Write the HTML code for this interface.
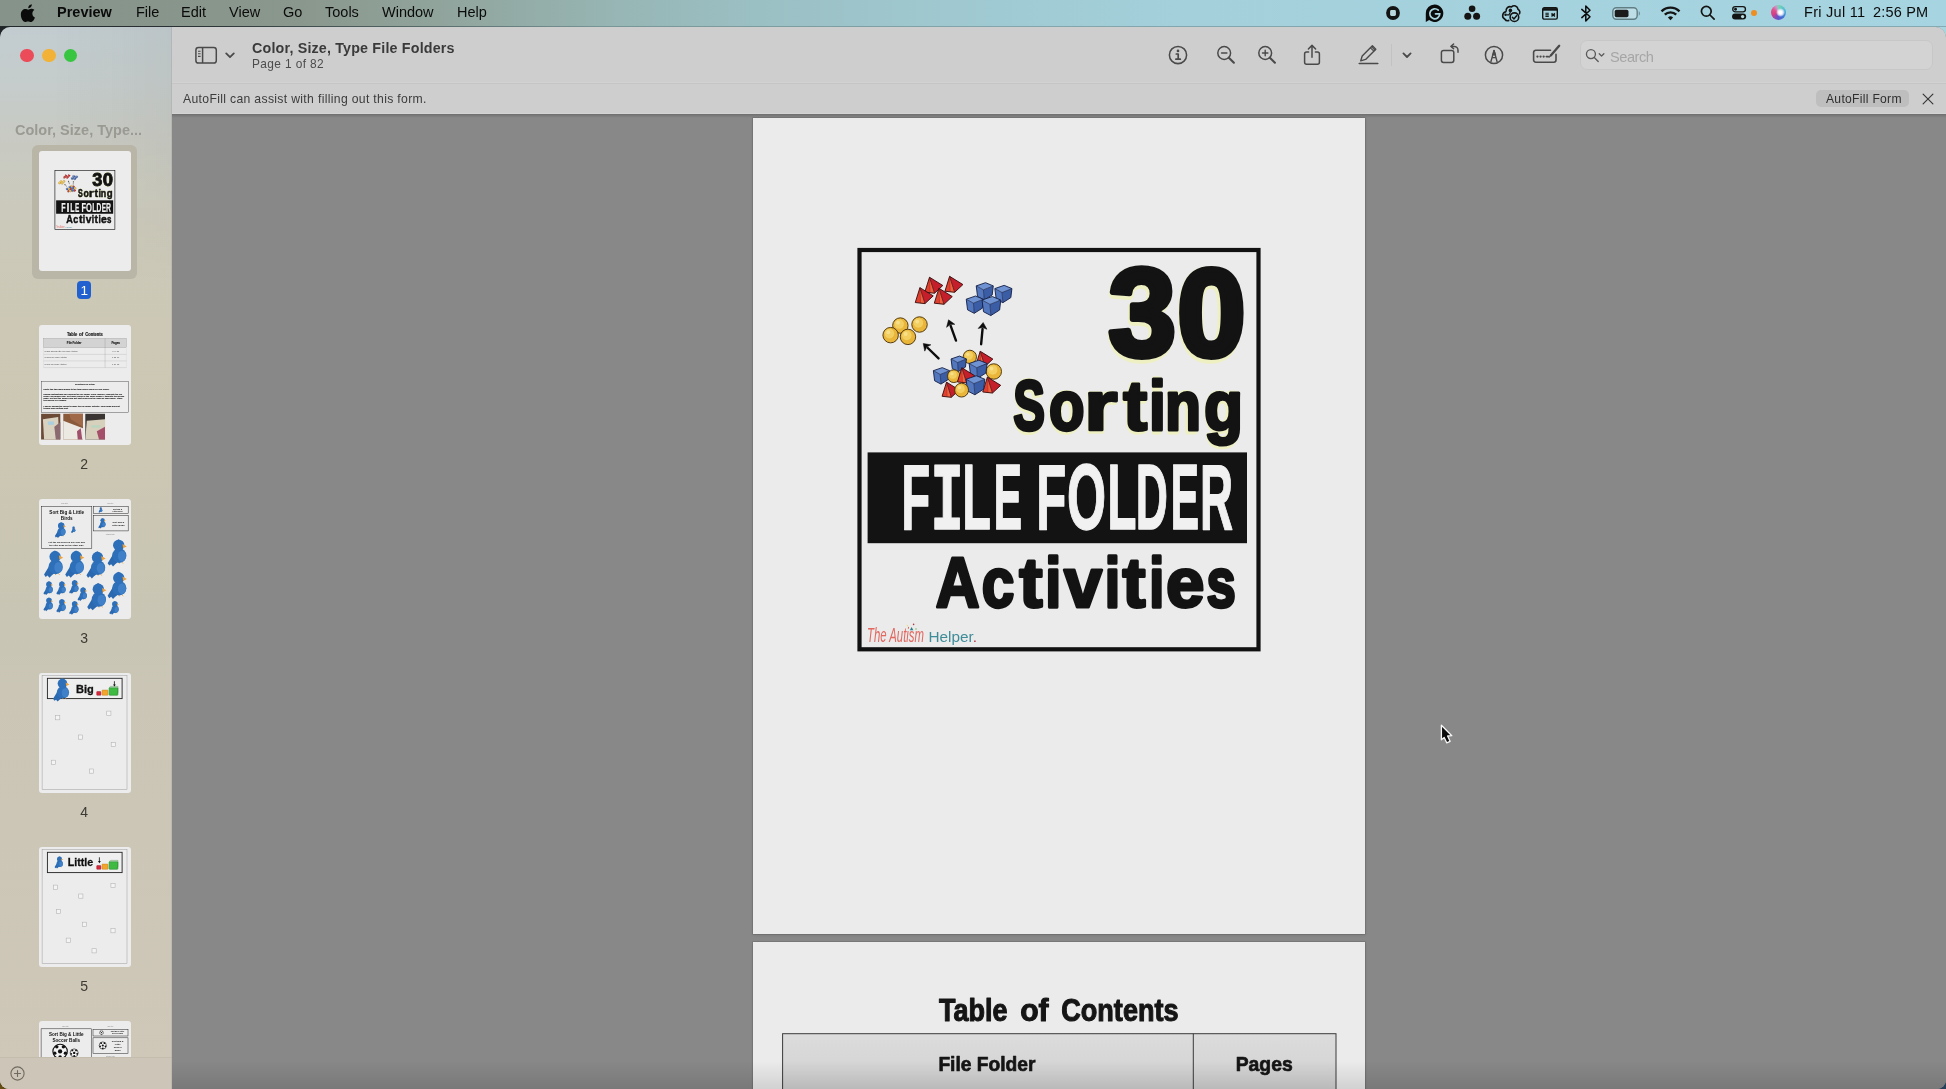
<!DOCTYPE html>
<html lang="en">
<head>
<meta charset="utf-8">
<title>Preview</title>
<style>
*{box-sizing:border-box;margin:0;padding:0}
html,body{width:1946px;height:1089px;overflow:hidden;background:#1d2226}
#bgtop{left:0;top:26px;width:1946px;height:14px;background:linear-gradient(90deg,#1f2427 0,#2a3033 200px,#566a68 420px,#7b9a9a 600px,#86aab0 1000px,#a9d5e0 1900px)}
#bgbl{left:0;top:1069px;width:20px;height:20px;background:linear-gradient(45deg,#6a5214,#2c2410 60%,#222 100%)}
#bgbr{left:1926px;top:1069px;width:20px;height:20px;background:#27405a}
#topline{left:0;top:25.6px;width:1946px;height:1.4px;background:linear-gradient(90deg,#23282b 0,#2c3235 200px,#566a68 420px,#789696 600px,#82a6ac 1000px,#86aab2 1946px);z-index:5}
body{font-family:"Liberation Sans","DejaVu Sans",sans-serif;position:relative;color:#2a2a2a}
.abs{position:absolute}
#menubar span,#tb_title,#tb_sub,#af_text,#af_btn,#tb_search,#sb_title,.tlabel,.gs{will-change:transform}
svg{position:absolute;overflow:visible}
#menubar{left:0;top:0;width:1946px;height:26px;background:linear-gradient(90deg,#86938a 0px,#8a978d 300px,#92a8a1 480px,#97b6b5 620px,#9bc0c4 760px,#a0cad3 1000px,#a3d0db 1180px,#a6d4e0 1946px)}
#menubar span{position:absolute;top:3px;font-size:14.5px;line-height:18px;color:#0b0b0b;white-space:nowrap}
#window{left:0;top:27px;width:1946px;height:1062px;border-radius:10.5px 10.5px 9px 9px;overflow:hidden;background:#888}
#winin{left:0;top:-1px;width:1946px;height:1063px}
#sidebar{left:0;top:0;width:172px;height:1063px;background:linear-gradient(180deg,#c2ccd0 0px,#c5cccb 60px,#c8cac3 110px,#cbc9ba 200px,#ccc8b5 300px,#cbc7b3 420px,#c9c5b4 600px,#ccc6b6 800px,#cfc8b8 1063px)}
#toolbar{left:172px;top:0;width:1774px;height:58px;background:#cecece}
#autofill{left:172px;top:58px;width:1774px;height:30px;background:#cecece}
#content{left:172px;top:88px;width:1774px;height:975px;background:#888}
.page{background:#ebebeb;box-shadow:0 0 0 .6px rgba(0,0,0,.16),0 1px 3px rgba(0,0,0,.14)}
.tlabel{position:absolute;margin-top:.6px;left:0;width:168.5px;text-align:center;font-size:14px;line-height:16px;color:#3c3a34}
.thumb{position:absolute;left:39px;width:91.8px;height:120.4px;background:#ececec;border-radius:3px;overflow:hidden}
</style>
</head>
<body>
<div id="bgtop" class="abs"></div><div id="bgbl" class="abs"></div><div id="bgbr" class="abs"></div><div id="topline" class="abs"></div>
<div id="menubar" class="abs">
  <svg style="left:20px;top:4px" width="17" height="18" viewBox="0 0 170 200"><path fill="#0b0b0b" d="M150 68c-10 6-22 19-22 40 0 25 16 37 28 42-2 8-9 24-19 36-9 11-18 14-27 14-11 0-17-6-31-6-14 0-21 6-31 6-11 0-20-7-29-19C6 164 0 138 0 116 0 76 26 55 50 55c12 0 23 8 31 8 8 0 20-9 35-9 8 0 25 2 34 14zM112 33c6-8 11-19 10-31-10 1-22 7-29 15-6 7-12 18-10 29 11 1 22-5 29-13z"/></svg>
  <span id="m_preview" style="left:57px;font-weight:bold">Preview</span>
  <span id="m_file" style="left:136px">File</span>
  <span id="m_edit" style="left:181px">Edit</span>
  <span id="m_view" style="left:229px">View</span>
  <span id="m_go" style="left:283px">Go</span>
  <span id="m_tools" style="left:325px">Tools</span>
  <span id="m_window" style="left:382px">Window</span>
  <span id="m_help" style="left:457px">Help</span>
  <!-- status icons -->
  <svg style="left:1386px;top:5.800px" width="14" height="14" viewBox="0 0 14 14"><circle cx="7" cy="7" r="6.9" fill="#141414"/><rect x="4.100" y="4.100" width="5.800" height="5.800" rx="1.300" fill="#b9d8de"/></svg>
  <svg style="left:1425px;top:3.600px" width="19" height="19" viewBox="0 0 19 19"><path d="M9.600,0.600a8.700,8.700 0 1 1-5.400,15.500L0.800,17.900V9.300A8.700,8.700 0 0 1 9.600,0.600z" fill="#0b0b0b"/><path d="M13.300,6.200a5,5 0 1 0 1.500,3.600h-4.300" fill="none" stroke="#a9d5df" stroke-width="1.700" stroke-linecap="round"/></svg>
  <svg style="left:1463px;top:5px" width="18" height="17" viewBox="0 0 18 17"><circle cx="9.100" cy="3.800" r="3.300" fill="#141414"/><circle cx="4.800" cy="11.300" r="3.500" fill="#141414"/><circle cx="13.600" cy="11.300" r="3.500" fill="#141414"/></svg>
  <svg style="left:1500px;top:3px" width="21" height="21" viewBox="0 0 21 21" fill="none" stroke="#141414" stroke-width="1.600"><path d="M6.200,8.700a4,4 0 0 1 5.300,-4.800a3.800,3.800 0 0 1 6.500,2.300a3.600,3.600 0 0 1 1.200,5.200"/><path d="M6.200,8.700a3.900,3.900 0 0 0 -1.500,7.300a3.600,3.600 0 0 0 4.600,1.300"/><circle cx="10.400" cy="7.400" r="1.800" fill="#141414" stroke="none"/><circle cx="5.600" cy="11.800" r="1.300" fill="#141414" stroke="none"/><path d="M6.800,11.800h2.200l1.400,-2.800" stroke-width="1.200"/><circle cx="14.400" cy="14.200" r="4.300" fill="#a5d2dd"/><path d="M12.400,14.300l1.500,1.600l2.700,-3.200" stroke-width="1.500" stroke-linecap="round" stroke-linejoin="round"/></svg>
  <svg style="left:1542px;top:6.800px" width="16" height="13" viewBox="0 0 16 13" fill="none" stroke="#141414"><rect x=".7" y=".7" width="14.600" height="11.400" rx="1.600" stroke-width="1.400"/><path d="M1,2.400h14" stroke-width="2.600"/><path d="M3.400,6.300h3.400M3.400,7.900h3.400M3.400,9.500h3.400" stroke-width="1.100"/><path d="M9.600,6.200l3.200,3.400M12.800,6.200l-3.200,3.400M9.300,7.900h3.800" stroke-width="1.100"/></svg>
  <svg style="left:1580px;top:4px" width="12" height="19" viewBox="0 0 12 19" fill="none" stroke="#0b0b0b" stroke-width="1.5" stroke-linejoin="round" stroke-linecap="round"><path d="M1.8 5.4l8.2 7.4-4.2 4.2V2l4.2 4.2-8.2 7.4"/></svg>
  <svg style="left:1612px;top:7px" width="29" height="13" viewBox="0 0 29 13"><rect x=".8" y=".8" width="24.400" height="11.400" rx="3.600" fill="rgba(255,255,255,.28)" stroke="#627e85" stroke-width="1.400"/><rect x="2.700" y="2.700" width="13.800" height="7.600" rx="1.800" fill="#1c1c1c"/><path d="M26.800,4.300c1.300,.4 1.300,4 0,4.400z" fill="#627e85"/></svg>
  <svg style="left:1660px;top:5px" width="21" height="16" viewBox="0 0 21 16" fill="none" stroke="#141414" stroke-width="2.400" stroke-linecap="butt"><path d="M1.500,6.300a12.800,12.800 0 0 1 18,0"/><path d="M4.800,9.700a8.100,8.100 0 0 1 11.400,0"/><path d="M7.900,12.600a3.700,3.700 0 0 1 5.200,0l-2.600,2.600z" fill="#141414" stroke="none"/></svg>
  <svg style="left:1700px;top:4.600px" width="15.300" height="15.300" viewBox="0 0 17 17" fill="none" stroke="#141414" stroke-width="1.900" stroke-linecap="round"><circle cx="7" cy="7" r="5.400"/><path d="M11.100,11.100l4.600,4.600"/></svg>
  <svg style="left:1731.800px;top:6.300px" width="14.200" height="13.600" viewBox="0 0 16 15.400"><rect x=".8" y=".8" width="14.400" height="5.800" rx="2.900" fill="none" stroke="#141414" stroke-width="1.500"/><circle cx="4" cy="3.700" r="1.600" fill="#141414"/><rect x="0" y="8.600" width="16" height="6.800" rx="3.400" fill="#141414"/><circle cx="12" cy="12" r="1.900" fill="#b4dae2"/></svg>
  <div class="abs" style="left:1750.600px;top:9.600px;width:6.400px;height:6.400px;border-radius:50%;background:#ee8f22"></div>
  <div class="abs" style="left:1771.200px;top:5px;width:14.800px;height:14.800px;border-radius:50%;background:conic-gradient(from 0deg,#78d6b0 0deg,#4fb8d8 70deg,#3f6fd6 140deg,#6a4fc8 190deg,#d23f86 250deg,#e0528c 300deg,#c89ad0 340deg,#78d6b0 360deg)"></div>
  <div class="abs" style="left:1775.500px;top:8.200px;width:9px;height:8.400px;border-radius:50%;background:radial-gradient(closest-side,#ffffff 30%,rgba(240,236,250,.85) 60%,rgba(255,255,255,0) 100%)"></div>
  <span id="m_date" style="left:1803.5px;letter-spacing:.28px">Fri Jul 11</span>
  <span id="m_time" style="left:1872.5px;letter-spacing:.2px">2:56 PM</span>
</div>
<div id="window" class="abs"><div id="winin" class="abs">
  <div id="sidebar" class="abs">
    <div class="abs" style="left:0;top:0;width:172px;height:260px;background:linear-gradient(90deg,rgba(0,0,0,0) 30%,rgba(40,30,20,.045) 100%);-webkit-mask-image:linear-gradient(180deg,#000 40%,transparent);mask-image:linear-gradient(180deg,#000 40%,transparent)"></div>
    <div class="abs" style="left:20.400px;top:22.700px;width:13.400px;height:13.400px;border-radius:50%;background:#ec4c59"></div>
    <div class="abs" style="left:42.200px;top:22.700px;width:13.400px;height:13.400px;border-radius:50%;background:#f1b237"></div>
    <div class="abs" style="left:63.800px;top:22.700px;width:13.400px;height:13.400px;border-radius:50%;background:#38c641"></div>
    <div id="sb_title" class="abs" style="left:15px;top:95px;font-size:14.5px;line-height:18px;font-weight:bold;color:#9a9a93;white-space:nowrap">Color, Size, Type...</div>
    <div class="abs" style="left:31.800px;top:118.700px;width:105.200px;height:134.200px;border-radius:6px;background:#b9b5a7"></div><div class="thumb" style="top:124.9px"></div><div class="thumb" style="top:298.8px"></div><div class="thumb" style="top:472.8px"></div><div class="thumb" style="top:646.9px"></div><div class="thumb" style="top:820.9px"></div><div class="thumb" style="top:994.6px"></div><svg class="gs" style="left:0;top:-26px" width="172" height="1089" viewBox="0 0 172 1089"><g transform="translate(38.900,150.900) scale(0.15033,0.1478)"><rect x="106.5" y="132" width="399" height="399.3" fill="none" stroke="#111111" stroke-width="4.2"/><g transform="translate(117,147) scale(0.13311)"><polygon points="447.0,92.0 412.0,204.0 485.0,212.0" fill="#e2402f"/><polygon points="447.0,92.0 452.0,210.0 485.0,212.0" fill="#f0603c"/><polygon points="447.0,92.0 485.0,212.0 547.0,154.0" fill="#c41f2b"/><polygon points="447.0,92.0 412.0,204.0 485.0,212.0 547.0,154.0" fill="none" stroke="#3a0d0d" stroke-width="7" stroke-linejoin="round"/><path d="M447.0,92.0L485.0,212.0" stroke="#3a0d0d" stroke-width="5"/><path d="M447.0,92.0L452.0,210.0" stroke="#7a1515" stroke-width="2.5"/><polygon points="598.0,85.0 563.0,197.0 636.0,205.0" fill="#e2402f"/><polygon points="598.0,85.0 603.0,203.0 636.0,205.0" fill="#f0603c"/><polygon points="598.0,85.0 636.0,205.0 698.0,147.0" fill="#c41f2b"/><polygon points="598.0,85.0 563.0,197.0 636.0,205.0 698.0,147.0" fill="none" stroke="#3a0d0d" stroke-width="7" stroke-linejoin="round"/><path d="M598.0,85.0L636.0,205.0" stroke="#3a0d0d" stroke-width="5"/><path d="M598.0,85.0L603.0,203.0" stroke="#7a1515" stroke-width="2.5"/><polygon points="375.0,170.0 340.0,282.0 413.0,290.0" fill="#e2402f"/><polygon points="375.0,170.0 380.0,288.0 413.0,290.0" fill="#f0603c"/><polygon points="375.0,170.0 413.0,290.0 475.0,232.0" fill="#c41f2b"/><polygon points="375.0,170.0 340.0,282.0 413.0,290.0 475.0,232.0" fill="none" stroke="#3a0d0d" stroke-width="7" stroke-linejoin="round"/><path d="M375.0,170.0L413.0,290.0" stroke="#3a0d0d" stroke-width="5"/><path d="M375.0,170.0L380.0,288.0" stroke="#7a1515" stroke-width="2.5"/><polygon points="518.0,175.0 483.0,287.0 556.0,295.0" fill="#e2402f"/><polygon points="518.0,175.0 523.0,293.0 556.0,295.0" fill="#f0603c"/><polygon points="518.0,175.0 556.0,295.0 618.0,237.0" fill="#c41f2b"/><polygon points="518.0,175.0 483.0,287.0 556.0,295.0 618.0,237.0" fill="none" stroke="#3a0d0d" stroke-width="7" stroke-linejoin="round"/><path d="M518.0,175.0L556.0,295.0" stroke="#3a0d0d" stroke-width="5"/><path d="M518.0,175.0L523.0,293.0" stroke="#7a1515" stroke-width="2.5"/><polygon points="798.0,157.0 868.0,133.0 926.0,157.0 852.0,187.0" fill="#6f93d2"/><polygon points="798.0,157.0 852.0,187.0 858.0,263.0 808.0,237.0" fill="#5277bf"/><polygon points="852.0,187.0 926.0,157.0 918.0,225.0 858.0,263.0" fill="#3b5da6"/><polygon points="798.0,157.0 868.0,133.0 926.0,157.0 918.0,225.0 858.0,263.0 808.0,237.0" fill="none" stroke="#16224a" stroke-width="7" stroke-linejoin="round"/><path d="M798.0,157.0L852.0,187.0L926.0,157.0M852.0,187.0L858.0,263.0" fill="none" stroke="#16224a" stroke-width="5" stroke-linejoin="round"/><polygon points="938.0,177.0 1008.0,153.0 1066.0,177.0 992.0,207.0" fill="#6f93d2"/><polygon points="938.0,177.0 992.0,207.0 998.0,283.0 948.0,257.0" fill="#5277bf"/><polygon points="992.0,207.0 1066.0,177.0 1058.0,245.0 998.0,283.0" fill="#3b5da6"/><polygon points="938.0,177.0 1008.0,153.0 1066.0,177.0 1058.0,245.0 998.0,283.0 948.0,257.0" fill="none" stroke="#16224a" stroke-width="7" stroke-linejoin="round"/><path d="M938.0,177.0L992.0,207.0L1066.0,177.0M992.0,207.0L998.0,283.0" fill="none" stroke="#16224a" stroke-width="5" stroke-linejoin="round"/><polygon points="723.0,257.0 793.0,233.0 851.0,257.0 777.0,287.0" fill="#6f93d2"/><polygon points="723.0,257.0 777.0,287.0 783.0,363.0 733.0,337.0" fill="#5277bf"/><polygon points="777.0,287.0 851.0,257.0 843.0,325.0 783.0,363.0" fill="#3b5da6"/><polygon points="723.0,257.0 793.0,233.0 851.0,257.0 843.0,325.0 783.0,363.0 733.0,337.0" fill="none" stroke="#16224a" stroke-width="7" stroke-linejoin="round"/><path d="M723.0,257.0L777.0,287.0L851.0,257.0M777.0,287.0L783.0,363.0" fill="none" stroke="#16224a" stroke-width="5" stroke-linejoin="round"/><polygon points="841.8,263.2 918.8,236.8 982.6,263.2 901.2,296.2" fill="#6f93d2"/><polygon points="841.8,263.2 901.2,296.2 907.8,379.8 852.8,351.2" fill="#5277bf"/><polygon points="901.2,296.2 982.6,263.2 973.8,338.0 907.8,379.8" fill="#3b5da6"/><polygon points="841.8,263.2 918.8,236.8 982.6,263.2 973.8,338.0 907.8,379.8 852.8,351.2" fill="none" stroke="#16224a" stroke-width="7" stroke-linejoin="round"/><path d="M841.8,263.2L901.2,296.2L982.6,263.2M901.2,296.2L907.8,379.8" fill="none" stroke="#16224a" stroke-width="5" stroke-linejoin="round"/><circle cx="228.0" cy="455.0" r="58.0" fill="#e9b63a" stroke="#4a3206" stroke-width="7"/><circle cx="219.3" cy="443.4" r="36.0" fill="#f3cf62"/><circle cx="210.6" cy="433.0" r="14.5" fill="#f8e08a"/><circle cx="372.0" cy="447.0" r="58.0" fill="#e9b63a" stroke="#4a3206" stroke-width="7"/><circle cx="363.3" cy="435.4" r="36.0" fill="#f3cf62"/><circle cx="354.6" cy="425.0" r="14.5" fill="#f8e08a"/><circle cx="155.0" cy="527.0" r="58.0" fill="#e9b63a" stroke="#4a3206" stroke-width="7"/><circle cx="146.3" cy="515.4" r="36.0" fill="#f3cf62"/><circle cx="137.6" cy="505.0" r="14.5" fill="#f8e08a"/><circle cx="285.0" cy="540.0" r="58.0" fill="#e9b63a" stroke="#4a3206" stroke-width="7"/><circle cx="276.3" cy="528.4" r="36.0" fill="#f3cf62"/><circle cx="267.6" cy="518.0" r="14.5" fill="#f8e08a"/><path d="M515.0,702.0L434.4,623.5" stroke="#0d0d0d" stroke-width="18" stroke-linecap="round"/><polygon points="400.0,590.0 457.4,599.8 426.6,616.0 411.4,647.1" fill="#0d0d0d" stroke="#0d0d0d" stroke-width="4" stroke-linejoin="round"/><path d="M646.0,568.0L606.2,457.2" stroke="#0d0d0d" stroke-width="18" stroke-linecap="round"/><polygon points="590.0,412.0 637.3,446.0 602.6,447.0 575.2,468.3" fill="#0d0d0d" stroke="#0d0d0d" stroke-width="4" stroke-linejoin="round"/><path d="M835.0,595.0L845.6,479.8" stroke="#0d0d0d" stroke-width="18" stroke-linecap="round"/><polygon points="850.0,432.0 878.5,482.8 846.6,469.0 812.7,476.8" fill="#0d0d0d" stroke="#0d0d0d" stroke-width="4" stroke-linejoin="round"/><polygon points="828.0,648.0 794.8,754.4 864.1,762.0" fill="#e2402f"/><polygon points="828.0,648.0 832.8,760.1 864.1,762.0" fill="#f0603c"/><polygon points="828.0,648.0 864.1,762.0 923.0,706.9" fill="#c41f2b"/><polygon points="828.0,648.0 794.8,754.4 864.1,762.0 923.0,706.9" fill="none" stroke="#3a0d0d" stroke-width="7" stroke-linejoin="round"/><path d="M828.0,648.0L864.1,762.0" stroke="#3a0d0d" stroke-width="5"/><path d="M828.0,648.0L832.8,760.1" stroke="#7a1515" stroke-width="2.5"/><circle cx="750.0" cy="690.0" r="50.0" fill="#e9b63a" stroke="#4a3206" stroke-width="7"/><circle cx="742.5" cy="680.0" r="31.0" fill="#f3cf62"/><circle cx="735.0" cy="671.0" r="12.5" fill="#f8e08a"/><polygon points="609.2,705.8 672.2,684.2 724.4,705.8 657.8,732.8" fill="#6f93d2"/><polygon points="609.2,705.8 657.8,732.8 663.2,801.2 618.2,777.8" fill="#5277bf"/><polygon points="657.8,732.8 724.4,705.8 717.2,767.0 663.2,801.2" fill="#3b5da6"/><polygon points="609.2,705.8 672.2,684.2 724.4,705.8 717.2,767.0 663.2,801.2 618.2,777.8" fill="none" stroke="#16224a" stroke-width="7" stroke-linejoin="round"/><path d="M609.2,705.8L657.8,732.8L724.4,705.8M657.8,732.8L663.2,801.2" fill="none" stroke="#16224a" stroke-width="5" stroke-linejoin="round"/><polygon points="476.1,793.9 542.6,771.1 597.7,793.9 527.4,822.4" fill="#6f93d2"/><polygon points="476.1,793.9 527.4,822.4 533.1,894.6 485.6,869.9" fill="#5277bf"/><polygon points="527.4,822.4 597.7,793.9 590.1,858.5 533.1,894.6" fill="#3b5da6"/><polygon points="476.1,793.9 542.6,771.1 597.7,793.9 590.1,858.5 533.1,894.6 485.6,869.9" fill="none" stroke="#16224a" stroke-width="7" stroke-linejoin="round"/><path d="M476.1,793.9L527.4,822.4L597.7,793.9M527.4,822.4L533.1,894.6" fill="none" stroke="#16224a" stroke-width="5" stroke-linejoin="round"/><circle cx="930.0" cy="800.0" r="58.0" fill="#e9b63a" stroke="#4a3206" stroke-width="7"/><circle cx="921.3" cy="788.4" r="36.0" fill="#f3cf62"/><circle cx="912.6" cy="778.0" r="14.5" fill="#f8e08a"/><polygon points="744.9,740.1 818.4,714.9 879.3,740.1 801.6,771.6" fill="#6f93d2"/><polygon points="744.9,740.1 801.6,771.6 807.9,851.4 755.4,824.1" fill="#5277bf"/><polygon points="801.6,771.6 879.3,740.1 870.9,811.5 807.9,851.4" fill="#3b5da6"/><polygon points="744.9,740.1 818.4,714.9 879.3,740.1 870.9,811.5 807.9,851.4 755.4,824.1" fill="none" stroke="#16224a" stroke-width="7" stroke-linejoin="round"/><path d="M744.9,740.1L801.6,771.6L879.3,740.1M801.6,771.6L807.9,851.4" fill="none" stroke="#16224a" stroke-width="5" stroke-linejoin="round"/><circle cx="630.0" cy="835.0" r="48.0" fill="#e9b63a" stroke="#4a3206" stroke-width="7"/><circle cx="622.8" cy="825.4" r="29.8" fill="#f3cf62"/><circle cx="615.6" cy="816.8" r="12.0" fill="#f8e08a"/><polygon points="690.0,772.0 656.8,878.4 726.1,886.0" fill="#e2402f"/><polygon points="690.0,772.0 694.8,884.1 726.1,886.0" fill="#f0603c"/><polygon points="690.0,772.0 726.1,886.0 785.0,830.9" fill="#c41f2b"/><polygon points="690.0,772.0 656.8,878.4 726.1,886.0 785.0,830.9" fill="none" stroke="#3a0d0d" stroke-width="7" stroke-linejoin="round"/><path d="M690.0,772.0L726.1,886.0" stroke="#3a0d0d" stroke-width="5"/><path d="M690.0,772.0L694.8,884.1" stroke="#7a1515" stroke-width="2.5"/><polygon points="882.0,842.0 847.0,954.0 920.0,962.0" fill="#e2402f"/><polygon points="882.0,842.0 887.0,960.0 920.0,962.0" fill="#f0603c"/><polygon points="882.0,842.0 920.0,962.0 982.0,904.0" fill="#c41f2b"/><polygon points="882.0,842.0 847.0,954.0 920.0,962.0 982.0,904.0" fill="none" stroke="#3a0d0d" stroke-width="7" stroke-linejoin="round"/><path d="M882.0,842.0L920.0,962.0" stroke="#3a0d0d" stroke-width="5"/><path d="M882.0,842.0L887.0,960.0" stroke="#7a1515" stroke-width="2.5"/><polygon points="721.8,858.2 798.8,831.8 862.6,858.2 781.2,891.2" fill="#6f93d2"/><polygon points="721.8,858.2 781.2,891.2 787.8,974.8 732.8,946.2" fill="#5277bf"/><polygon points="781.2,891.2 862.6,858.2 853.8,933.0 787.8,974.8" fill="#3b5da6"/><polygon points="721.8,858.2 798.8,831.8 862.6,858.2 853.8,933.0 787.8,974.8 732.8,946.2" fill="none" stroke="#16224a" stroke-width="7" stroke-linejoin="round"/><path d="M721.8,858.2L781.2,891.2L862.6,858.2M781.2,891.2L787.8,974.8" fill="none" stroke="#16224a" stroke-width="5" stroke-linejoin="round"/><polygon points="575.0,880.0 541.8,986.4 611.1,994.0" fill="#e2402f"/><polygon points="575.0,880.0 579.8,992.1 611.1,994.0" fill="#f0603c"/><polygon points="575.0,880.0 611.1,994.0 670.0,938.9" fill="#c41f2b"/><polygon points="575.0,880.0 541.8,986.4 611.1,994.0 670.0,938.9" fill="none" stroke="#3a0d0d" stroke-width="7" stroke-linejoin="round"/><path d="M575.0,880.0L611.1,994.0" stroke="#3a0d0d" stroke-width="5"/><path d="M575.0,880.0L579.8,992.1" stroke="#7a1515" stroke-width="2.5"/><circle cx="688.0" cy="940.0" r="52.0" fill="#e9b63a" stroke="#4a3206" stroke-width="7"/><circle cx="680.2" cy="929.6" r="32.2" fill="#f3cf62"/><circle cx="672.4" cy="920.2" r="13.0" fill="#f8e08a"/></g><rect x="114.6" y="334.4" width="379.4" height="90.8" fill="#131313"/><text transform="translate(356.35,239.50) scale(0.9259,1.0000)" font-family="Liberation Sans, DejaVu Sans, sans-serif" font-weight="bold" font-size="124.5" fill="#eef0c2" stroke="#eef0c2" stroke-width="1.35" stroke-linejoin="round" vector-effect="non-scaling-stroke">3</text><text transform="translate(425.08,239.50) scale(0.9373,1.0000)" font-family="Liberation Sans, DejaVu Sans, sans-serif" font-weight="bold" font-size="124.5" fill="#eef0c2" stroke="#eef0c2" stroke-width="1.35" stroke-linejoin="round" vector-effect="non-scaling-stroke">0</text><text transform="translate(355.52,238.30) scale(0.9744,1.0000)" font-family="Liberation Sans, DejaVu Sans, sans-serif" font-weight="bold" font-size="124.5" fill="#131313" stroke="#131313" stroke-width="0.90" stroke-linejoin="round" vector-effect="non-scaling-stroke">3</text><text transform="translate(424.14,238.30) scale(0.9880,1.0000)" font-family="Liberation Sans, DejaVu Sans, sans-serif" font-weight="bold" font-size="124.5" fill="#131313" stroke="#131313" stroke-width="0.90" stroke-linejoin="round" vector-effect="non-scaling-stroke">0</text><text transform="translate(261.17,313.20) scale(0.6080,1.0000)" font-family="Liberation Sans, DejaVu Sans, sans-serif" font-weight="bold" font-size="70.0" fill="#eef0c2" stroke="#eef0c2" stroke-width="0.90" stroke-linejoin="round" vector-effect="non-scaling-stroke">S</text><text transform="translate(296.85,313.20) scale(0.7509,1.0000)" font-family="Liberation Sans, DejaVu Sans, sans-serif" font-weight="bold" font-size="70.0" fill="#eef0c2" stroke="#eef0c2" stroke-width="0.90" stroke-linejoin="round" vector-effect="non-scaling-stroke">o</text><text transform="translate(332.25,313.20) scale(1.0942,1.0000)" font-family="Liberation Sans, DejaVu Sans, sans-serif" font-weight="bold" font-size="70.0" fill="#eef0c2" stroke="#eef0c2" stroke-width="0.90" stroke-linejoin="round" vector-effect="non-scaling-stroke">r</text><text transform="translate(371.14,313.20) scale(0.8888,1.0000)" font-family="Liberation Sans, DejaVu Sans, sans-serif" font-weight="bold" font-size="70.0" fill="#eef0c2" stroke="#eef0c2" stroke-width="0.90" stroke-linejoin="round" vector-effect="non-scaling-stroke">t</text><text transform="translate(398.20,313.20) scale(0.5518,1.0000)" font-family="Liberation Sans, DejaVu Sans, sans-serif" font-weight="bold" font-size="70.0" fill="#eef0c2" stroke="#eef0c2" stroke-width="0.90" stroke-linejoin="round" vector-effect="non-scaling-stroke">i</text><text transform="translate(413.12,313.20) scale(0.7544,1.0000)" font-family="Liberation Sans, DejaVu Sans, sans-serif" font-weight="bold" font-size="70.0" fill="#eef0c2" stroke="#eef0c2" stroke-width="0.90" stroke-linejoin="round" vector-effect="non-scaling-stroke">n</text><text transform="translate(452.02,313.20) scale(0.8294,1.0000)" font-family="Liberation Sans, DejaVu Sans, sans-serif" font-weight="bold" font-size="70.0" fill="#eef0c2" stroke="#eef0c2" stroke-width="0.90" stroke-linejoin="round" vector-effect="non-scaling-stroke">g</text><text transform="translate(260.33,312.00) scale(0.6796,1.0000)" font-family="Liberation Sans, DejaVu Sans, sans-serif" font-weight="bold" font-size="70.0" fill="#131313" stroke="#131313" stroke-width="0.45" stroke-linejoin="round" vector-effect="non-scaling-stroke">S</text><text transform="translate(295.93,312.00) scale(0.8313,1.0000)" font-family="Liberation Sans, DejaVu Sans, sans-serif" font-weight="bold" font-size="70.0" fill="#131313" stroke="#131313" stroke-width="0.45" stroke-linejoin="round" vector-effect="non-scaling-stroke">o</text><text transform="translate(330.91,312.00) scale(1.2333,1.0000)" font-family="Liberation Sans, DejaVu Sans, sans-serif" font-weight="bold" font-size="70.0" fill="#131313" stroke="#131313" stroke-width="0.45" stroke-linejoin="round" vector-effect="non-scaling-stroke">r</text><text transform="translate(370.32,312.00) scale(1.0277,1.0000)" font-family="Liberation Sans, DejaVu Sans, sans-serif" font-weight="bold" font-size="70.0" fill="#131313" stroke="#131313" stroke-width="0.45" stroke-linejoin="round" vector-effect="non-scaling-stroke">t</text><text transform="translate(395.98,312.00) scale(0.8642,1.0000)" font-family="Liberation Sans, DejaVu Sans, sans-serif" font-weight="bold" font-size="70.0" fill="#131313" stroke="#131313" stroke-width="0.45" stroke-linejoin="round" vector-effect="non-scaling-stroke">i</text><text transform="translate(412.01,312.00) scale(0.8431,1.0000)" font-family="Liberation Sans, DejaVu Sans, sans-serif" font-weight="bold" font-size="70.0" fill="#131313" stroke="#131313" stroke-width="0.45" stroke-linejoin="round" vector-effect="non-scaling-stroke">n</text><text transform="translate(451.07,312.00) scale(0.9146,1.0000)" font-family="Liberation Sans, DejaVu Sans, sans-serif" font-weight="bold" font-size="70.0" fill="#131313" stroke="#131313" stroke-width="0.45" stroke-linejoin="round" vector-effect="non-scaling-stroke">g</text><text transform="translate(148.37,411.30) scale(0.5175,1.0000)" font-family="Liberation Sans, DejaVu Sans, sans-serif" font-weight="bold" font-size="91.8" fill="#f1f1f1" stroke="#f1f1f1" stroke-width="0.16" stroke-linejoin="round" vector-effect="non-scaling-stroke">F</text><text transform="translate(184.42,411.30) scale(0.7865,1.0000)" font-family="Liberation Sans, DejaVu Sans, sans-serif" font-weight="bold" font-size="91.8" fill="#f1f1f1" stroke="#f1f1f1" stroke-width="0.16" stroke-linejoin="round" vector-effect="non-scaling-stroke">I</text><text transform="translate(209.21,411.30) scale(0.5116,1.0000)" font-family="Liberation Sans, DejaVu Sans, sans-serif" font-weight="bold" font-size="91.8" fill="#f1f1f1" stroke="#f1f1f1" stroke-width="0.16" stroke-linejoin="round" vector-effect="non-scaling-stroke">L</text><text transform="translate(240.38,411.30) scale(0.4679,1.0000)" font-family="Liberation Sans, DejaVu Sans, sans-serif" font-weight="bold" font-size="91.8" fill="#f1f1f1" stroke="#f1f1f1" stroke-width="0.16" stroke-linejoin="round" vector-effect="non-scaling-stroke">E</text><text transform="translate(283.15,411.30) scale(0.5368,1.0000)" font-family="Liberation Sans, DejaVu Sans, sans-serif" font-weight="bold" font-size="91.8" fill="#f1f1f1" stroke="#f1f1f1" stroke-width="0.16" stroke-linejoin="round" vector-effect="non-scaling-stroke">F</text><text transform="translate(314.09,411.30) scale(0.5472,1.0000)" font-family="Liberation Sans, DejaVu Sans, sans-serif" font-weight="bold" font-size="91.8" fill="#f1f1f1" stroke="#f1f1f1" stroke-width="0.16" stroke-linejoin="round" vector-effect="non-scaling-stroke">O</text><text transform="translate(354.24,411.30) scale(0.5222,1.0000)" font-family="Liberation Sans, DejaVu Sans, sans-serif" font-weight="bold" font-size="91.8" fill="#f1f1f1" stroke="#f1f1f1" stroke-width="0.16" stroke-linejoin="round" vector-effect="non-scaling-stroke">L</text><text transform="translate(382.77,411.30) scale(0.4849,1.0000)" font-family="Liberation Sans, DejaVu Sans, sans-serif" font-weight="bold" font-size="91.8" fill="#f1f1f1" stroke="#f1f1f1" stroke-width="0.16" stroke-linejoin="round" vector-effect="non-scaling-stroke">D</text><text transform="translate(417.58,411.30) scale(0.4679,1.0000)" font-family="Liberation Sans, DejaVu Sans, sans-serif" font-weight="bold" font-size="91.8" fill="#f1f1f1" stroke="#f1f1f1" stroke-width="0.16" stroke-linejoin="round" vector-effect="non-scaling-stroke">E</text><text transform="translate(447.08,411.30) scale(0.4994,1.0000)" font-family="Liberation Sans, DejaVu Sans, sans-serif" font-weight="bold" font-size="91.8" fill="#f1f1f1" stroke="#f1f1f1" stroke-width="0.16" stroke-linejoin="round" vector-effect="non-scaling-stroke">R</text><text transform="translate(182.69,489.20) scale(0.8605,1.0000)" font-family="Liberation Sans, DejaVu Sans, sans-serif" font-weight="bold" font-size="70.5" fill="#131313" stroke="#131313" stroke-width="0.45" stroke-linejoin="round" vector-effect="non-scaling-stroke">A</text><text transform="translate(228.81,489.20) scale(0.8317,1.0000)" font-family="Liberation Sans, DejaVu Sans, sans-serif" font-weight="bold" font-size="70.5" fill="#131313" stroke="#131313" stroke-width="0.45" stroke-linejoin="round" vector-effect="non-scaling-stroke">c</text><text transform="translate(266.35,489.20) scale(0.9928,1.0000)" font-family="Liberation Sans, DejaVu Sans, sans-serif" font-weight="bold" font-size="70.5" fill="#131313" stroke="#131313" stroke-width="0.45" stroke-linejoin="round" vector-effect="non-scaling-stroke">t</text><text transform="translate(292.28,489.20) scale(0.8167,1.0000)" font-family="Liberation Sans, DejaVu Sans, sans-serif" font-weight="bold" font-size="70.5" fill="#131313" stroke="#131313" stroke-width="0.45" stroke-linejoin="round" vector-effect="non-scaling-stroke">i</text><text transform="translate(310.93,489.20) scale(0.9709,1.0000)" font-family="Liberation Sans, DejaVu Sans, sans-serif" font-weight="bold" font-size="70.5" fill="#131313" stroke="#131313" stroke-width="0.45" stroke-linejoin="round" vector-effect="non-scaling-stroke">v</text><text transform="translate(351.83,489.20) scale(0.7857,1.0000)" font-family="Liberation Sans, DejaVu Sans, sans-serif" font-weight="bold" font-size="70.5" fill="#131313" stroke="#131313" stroke-width="0.45" stroke-linejoin="round" vector-effect="non-scaling-stroke">i</text><text transform="translate(369.46,489.20) scale(0.9790,1.0000)" font-family="Liberation Sans, DejaVu Sans, sans-serif" font-weight="bold" font-size="70.5" fill="#131313" stroke="#131313" stroke-width="0.45" stroke-linejoin="round" vector-effect="non-scaling-stroke">t</text><text transform="translate(396.13,489.20) scale(0.7650,1.0000)" font-family="Liberation Sans, DejaVu Sans, sans-serif" font-weight="bold" font-size="70.5" fill="#131313" stroke="#131313" stroke-width="0.45" stroke-linejoin="round" vector-effect="non-scaling-stroke">i</text><text transform="translate(412.90,489.20) scale(0.9810,1.0000)" font-family="Liberation Sans, DejaVu Sans, sans-serif" font-weight="bold" font-size="70.5" fill="#131313" stroke="#131313" stroke-width="0.45" stroke-linejoin="round" vector-effect="non-scaling-stroke">e</text><text transform="translate(453.45,489.20) scale(0.7477,1.0000)" font-family="Liberation Sans, DejaVu Sans, sans-serif" font-weight="bold" font-size="70.5" fill="#131313" stroke="#131313" stroke-width="0.45" stroke-linejoin="round" vector-effect="non-scaling-stroke">s</text><text id="tclogo1" x="114" y="524" font-family="Liberation Sans, DejaVu Sans, sans-serif" font-style="italic" font-size="19.5" textLength="57" lengthAdjust="spacingAndGlyphs" fill="#e2675f">The Autism</text><text id="tclogo2" x="175.5" y="523.900" font-family="Liberation Sans, DejaVu Sans, sans-serif" font-size="14" textLength="48.5" lengthAdjust="spacingAndGlyphs" fill="#3f8c99">Helper<tspan fill="#b23a48">.</tspan></text><path d="M156.800,512.200l1.800,-3.200l1.800,3.200z" fill="#2a7f8e"/><circle cx="160.600" cy="506.400" r="0.800" fill="#b23a48"/><rect x="162.300" y="510.300" width="1.400" height="1.400" fill="#8fbf6f"/><path d="M154,506.800l1.200,2" stroke="#e8d86a" stroke-width="0.800"/></g><g transform="translate(39.100,324.800) scale(0.1498,0.1477)"><text x="186.0" y="78.6" font-family="Liberation Sans, DejaVu Sans, sans-serif" font-weight="bold" font-size="31.5" textLength="68.5" lengthAdjust="spacingAndGlyphs" fill="#151515" stroke="#151515" stroke-width="1.1" stroke-linejoin="round">Table</text><text x="267.2" y="78.6" font-family="Liberation Sans, DejaVu Sans, sans-serif" font-weight="bold" font-size="31.5" textLength="28.4" lengthAdjust="spacingAndGlyphs" fill="#151515" stroke="#151515" stroke-width="1.1" stroke-linejoin="round">of</text><text x="308.3" y="78.6" font-family="Liberation Sans, DejaVu Sans, sans-serif" font-weight="bold" font-size="31.5" textLength="117.2" lengthAdjust="spacingAndGlyphs" fill="#151515" stroke="#151515" stroke-width="1.1" stroke-linejoin="round">Contents</text><rect x="29.6" y="91.7" width="553.4" height="62.7" fill="#d3d3d3" stroke="#3a3a3a" stroke-width="1"/><text x="185.4" y="129.2" font-family="Liberation Sans, DejaVu Sans, sans-serif" font-weight="bold" font-size="20.8" textLength="97" lengthAdjust="spacingAndGlyphs" fill="#151515" stroke="#151515" stroke-width="0.7" stroke-linejoin="round">File Folder</text><text x="482.7" y="129.2" font-family="Liberation Sans, DejaVu Sans, sans-serif" font-weight="bold" font-size="20.8" textLength="57" lengthAdjust="spacingAndGlyphs" fill="#151515" stroke="#151515" stroke-width="0.7" stroke-linejoin="round">Pages</text><path d="M29.600,200.4H583" stroke="#6a6a6a" stroke-width="1"/><text x="36" y="181.4" font-family="Liberation Sans, DejaVu Sans, sans-serif" font-size="11.5" fill="#333">10 Size (Big and Little) File Folder Activities</text><text x="511" y="181.4" font-family="Liberation Sans, DejaVu Sans, sans-serif" font-size="11.5" fill="#333" text-anchor="middle">p. 3 - 32</text><path d="M29.600,244.4H583" stroke="#6a6a6a" stroke-width="1"/><text x="36" y="226.4" font-family="Liberation Sans, DejaVu Sans, sans-serif" font-size="11.5" fill="#333">10 Color File Folder Activities</text><text x="511" y="226.4" font-family="Liberation Sans, DejaVu Sans, sans-serif" font-size="11.5" fill="#333" text-anchor="middle">p. 33 - 56</text><path d="M29.600,289.8H583" stroke="#6a6a6a" stroke-width="1"/><text x="36" y="271.1" font-family="Liberation Sans, DejaVu Sans, sans-serif" font-size="11.5" fill="#333">10 Type File Folder Activities</text><text x="511" y="271.1" font-family="Liberation Sans, DejaVu Sans, sans-serif" font-size="11.5" fill="#333" text-anchor="middle">p. 57 - 82</text><path d="M440.300,91.700V289.800" stroke="#3a3a3a" stroke-width="1"/><path d="M29.600,154.400V289.800M583,154.400V289.800" stroke="#9a9a9a" stroke-width=".8"/><rect x="15.4" y="383.2" width="583.4" height="212" fill="none" stroke="#222" stroke-width="2.5"/><text x="306" y="409" font-family="Liberation Sans, DejaVu Sans, sans-serif" font-weight="bold" font-size="13.5" text-anchor="middle" fill="#111" stroke="#111" stroke-width=".4">Directions for setup:</text><text x="30" y="441" font-family="Liberation Sans, DejaVu Sans, sans-serif" font-weight="bold" font-size="14.6" fill="#111" stroke="#111" stroke-width=".5">Paste the two main pages to the two inside sides of a file folder.</text><text x="30" y="474" font-family="Liberation Sans, DejaVu Sans, sans-serif" font-weight="bold" font-size="14.6" fill="#111" stroke="#111" stroke-width=".5">Follow instructions for labeling the file folder. Once labeled, laminate the file</text><text x="30" y="488" font-family="Liberation Sans, DejaVu Sans, sans-serif" font-weight="bold" font-size="14.6" fill="#111" stroke="#111" stroke-width=".5">folder (no longer use). Put hard velcro in the small boxes. Laminate the pieces</text><text x="30" y="502" font-family="Liberation Sans, DejaVu Sans, sans-serif" font-weight="bold" font-size="14.6" fill="#111" stroke="#111" stroke-width=".5">page. Cut out the pieces and put soft velcro on the back of each piece. Store</text><text x="30" y="516" font-family="Liberation Sans, DejaVu Sans, sans-serif" font-weight="bold" font-size="14.6" fill="#111" stroke="#111" stroke-width=".5">the pieces in a baggie.</text><text x="30" y="557" font-family="Liberation Sans, DejaVu Sans, sans-serif" font-weight="bold" font-size="14.6" fill="#111" stroke="#111" stroke-width=".5">Labels: Follow the guide to label the file folder activity. This helps prevent</text><text x="30" y="571" font-family="Liberation Sans, DejaVu Sans, sans-serif" font-weight="bold" font-size="14.6" fill="#111" stroke="#111" stroke-width=".5">things from getting lost.</text><rect x="13.4" y="602.6" width="128.1" height="174" fill="#6b4a36"/><polygon points="25.4,640 127.5,625 133.5,776.600 33.4,776.600" fill="#d9d2c0"/><polygon points="101.5,690 141.5,660 141.5,776.600 111.5,776.600" fill="#8a6a6e"/><rect x="58.4" y="655" width="40" height="22" fill="#a9cfe0"/><rect x="161.5" y="602.6" width="131.5" height="174" fill="#8a5a3a"/><polygon points="161.5,650 293,700 293,776.600 161.5,776.600" fill="#ece9e2"/><polygon points="201.5,602.600 293,602.600 293,690 211.5,640" fill="#a06a48"/><polygon points="253,720 278,700 288,776.600 258,776.600" fill="#a0506a"/><rect x="308.4" y="602.6" width="131.60000000000002" height="174" fill="#3a3432"/><polygon points="318.4,650 440,640 440,776.600 308.4,776.600" fill="#d6d0bc"/><rect x="348.4" y="680" width="60" height="16" fill="#b9d6c0"/><polygon points="385,720 440,690 440,776.600 400,776.600" fill="#a5506a"/></g><text x="64.50" y="504.20" font-family="Liberation Sans, DejaVu Sans, sans-serif" font-size="1.6" font-weight="normal" text-anchor="middle" fill="#888">Main Title</text><text x="110.30" y="504.20" font-family="Liberation Sans, DejaVu Sans, sans-serif" font-size="1.6" font-weight="normal" text-anchor="middle" fill="#888">Tab Title</text><text x="110.30" y="535.40" font-family="Liberation Sans, DejaVu Sans, sans-serif" font-size="1.6" font-weight="normal" text-anchor="middle" fill="#888">Straight Title</text><rect x="41.40" y="506.40" width="50.40" height="41.90" fill="none" stroke="#222" stroke-width="0.5"/><text x="66.70" y="514.00" font-family="Liberation Sans, DejaVu Sans, sans-serif" font-size="4.6" font-weight="bold" text-anchor="middle" fill="#111">Sort Big &amp; Little</text><text x="66.70" y="519.60" font-family="Liberation Sans, DejaVu Sans, sans-serif" font-size="4.6" font-weight="bold" text-anchor="middle" fill="#111">Birds</text><path d="M61.08,535.47 L61.70,536.40 M62.94,535.47 L63.87,536.25" stroke="#e8a040" stroke-width="0.46"/><polygon points="58.28,530.51 54.88,536.09 55.80,537.49 56.89,536.71 57.98,537.95 59.06,536.87 61.08,535.16" fill="#2a68b0"/><ellipse cx="61.54" cy="531.75" rx="4.11" ry="4.19" fill="#2d6fb8"/><ellipse cx="63.09" cy="532.06" rx="2.32" ry="3.10" fill="#3f80c8"/><circle cx="61.23" cy="525.86" r="3.25" fill="#2d6fb8"/><polygon points="59.52,523.38 61.08,522.30 62.62,523.23" fill="#2d6fb8"/><polygon points="63.40,525.09 65.88,526.48 63.71,527.57" fill="#f0a23a"/><path d="M73.52,531.91 L73.78,532.30 M74.30,531.91 L74.69,532.24" stroke="#e8a040" stroke-width="0.20"/><polygon points="72.36,529.83 70.92,532.17 71.31,532.75 71.77,532.43 72.22,532.95 72.68,532.50 73.52,531.78" fill="#2a68b0"/><ellipse cx="73.72" cy="530.35" rx="1.72" ry="1.76" fill="#2d6fb8"/><ellipse cx="74.37" cy="530.48" rx="0.97" ry="1.30" fill="#3f80c8"/><circle cx="73.59" cy="527.88" r="1.36" fill="#2d6fb8"/><polygon points="72.88,526.84 73.52,526.38 74.17,526.78" fill="#2d6fb8"/><polygon points="74.50,527.56 75.54,528.14 74.63,528.60" fill="#f0a23a"/><text x="66.70" y="543.20" font-family="Liberation Sans, DejaVu Sans, sans-serif" font-size="2.3" font-weight="bold" text-anchor="middle" fill="#111">Put the big birds on one side and</text><text x="66.70" y="546.20" font-family="Liberation Sans, DejaVu Sans, sans-serif" font-size="2.3" font-weight="bold" text-anchor="middle" fill="#111">the little birds on the other side.</text><rect x="93.30" y="506.40" width="34.90" height="7.10" fill="none" stroke="#222" stroke-width="0.5"/><path d="M100.78,511.87 L101.00,512.20 M101.44,511.87 L101.77,512.14" stroke="#e8a040" stroke-width="0.16"/><polygon points="99.78,510.11 98.58,512.09 98.91,512.59 99.29,512.31 99.67,512.75 100.06,512.37 100.78,511.76" fill="#2a68b0"/><ellipse cx="100.94" cy="510.55" rx="1.46" ry="1.49" fill="#2d6fb8"/><ellipse cx="101.49" cy="510.66" rx="0.82" ry="1.10" fill="#3f80c8"/><circle cx="100.83" cy="508.46" r="1.16" fill="#2d6fb8"/><polygon points="100.23,507.58 100.78,507.19 101.33,507.52" fill="#2d6fb8"/><polygon points="101.60,508.19 102.48,508.68 101.71,509.06" fill="#f0a23a"/><text x="117.50" y="509.60" font-family="Liberation Sans, DejaVu Sans, sans-serif" font-size="1.9" font-weight="bold" text-anchor="middle" fill="#111">Sort Big &amp;</text><text x="117.50" y="511.80" font-family="Liberation Sans, DejaVu Sans, sans-serif" font-size="1.9" font-weight="bold" text-anchor="middle" fill="#111">Little Birds</text><rect x="93.30" y="515.50" width="34.90" height="15.40" fill="none" stroke="#222" stroke-width="0.5"/><path d="M102.53,526.87 L102.95,527.50 M103.78,526.87 L104.42,527.39" stroke="#e8a040" stroke-width="0.32"/><polygon points="100.64,523.51 98.33,527.29 98.95,528.23 99.69,527.71 100.42,528.55 101.16,527.81 102.53,526.66" fill="#2a68b0"/><ellipse cx="102.84" cy="524.35" rx="2.78" ry="2.83" fill="#2d6fb8"/><ellipse cx="103.89" cy="524.56" rx="1.57" ry="2.10" fill="#3f80c8"/><circle cx="102.63" cy="520.36" r="2.21" fill="#2d6fb8"/><polygon points="101.48,518.68 102.53,517.94 103.58,518.57" fill="#2d6fb8"/><polygon points="104.10,519.83 105.78,520.78 104.31,521.51" fill="#f0a23a"/><text x="118.40" y="522.60" font-family="Liberation Sans, DejaVu Sans, sans-serif" font-size="2.4" font-weight="bold" text-anchor="middle" fill="#111">Sort Big &amp;</text><text x="118.40" y="526.00" font-family="Liberation Sans, DejaVu Sans, sans-serif" font-size="2.4" font-weight="bold" text-anchor="middle" fill="#111">Little Birds</text><path d="M54.85,573.38 L55.93,575.00 M58.09,573.38 L59.71,574.73" stroke="#e8a040" stroke-width="0.81"/><polygon points="49.99,564.74 44.05,574.46 45.67,576.89 47.56,575.54 49.45,577.70 51.34,575.81 54.85,572.84" fill="#2a68b0"/><ellipse cx="55.66" cy="566.90" rx="7.16" ry="7.29" fill="#2d6fb8"/><ellipse cx="58.36" cy="567.44" rx="4.05" ry="5.40" fill="#3f80c8"/><circle cx="55.12" cy="556.64" r="5.67" fill="#2d6fb8"/><polygon points="52.15,552.32 54.85,550.43 57.55,552.05" fill="#2d6fb8"/><polygon points="58.90,555.29 63.22,557.72 59.44,559.61" fill="#f0a23a"/><path d="M76.05,573.38 L77.13,575.00 M79.29,573.38 L80.91,574.73" stroke="#e8a040" stroke-width="0.81"/><polygon points="71.19,564.74 65.25,574.46 66.87,576.89 68.76,575.54 70.65,577.70 72.54,575.81 76.05,572.84" fill="#2a68b0"/><ellipse cx="76.86" cy="566.90" rx="7.16" ry="7.29" fill="#2d6fb8"/><ellipse cx="79.56" cy="567.44" rx="4.05" ry="5.40" fill="#3f80c8"/><circle cx="76.32" cy="556.64" r="5.67" fill="#2d6fb8"/><polygon points="73.35,552.32 76.05,550.43 78.75,552.05" fill="#2d6fb8"/><polygon points="80.10,555.29 84.42,557.72 80.64,559.61" fill="#f0a23a"/><path d="M97.25,574.18 L98.33,575.80 M100.49,574.18 L102.11,575.53" stroke="#e8a040" stroke-width="0.81"/><polygon points="92.39,565.54 86.45,575.26 88.07,577.69 89.96,576.34 91.85,578.50 93.74,576.61 97.25,573.64" fill="#2a68b0"/><ellipse cx="98.06" cy="567.70" rx="7.16" ry="7.29" fill="#2d6fb8"/><ellipse cx="100.76" cy="568.24" rx="4.05" ry="5.40" fill="#3f80c8"/><circle cx="97.52" cy="557.44" r="5.67" fill="#2d6fb8"/><polygon points="94.55,553.12 97.25,551.23 99.95,552.85" fill="#2d6fb8"/><polygon points="101.30,556.09 105.62,558.52 101.84,560.41" fill="#f0a23a"/><path d="M118.45,562.08 L119.53,563.70 M121.69,562.08 L123.31,563.43" stroke="#e8a040" stroke-width="0.81"/><polygon points="113.59,553.44 107.65,563.16 109.27,565.59 111.16,564.24 113.05,566.40 114.94,564.51 118.45,561.54" fill="#2a68b0"/><ellipse cx="119.26" cy="555.60" rx="7.16" ry="7.29" fill="#2d6fb8"/><ellipse cx="121.96" cy="556.14" rx="4.05" ry="5.40" fill="#3f80c8"/><circle cx="118.72" cy="545.34" r="5.67" fill="#2d6fb8"/><polygon points="115.75,541.02 118.45,539.13 121.15,540.75" fill="#2d6fb8"/><polygon points="122.50,543.99 126.82,546.42 123.04,548.31" fill="#f0a23a"/><path d="M118.45,594.68 L119.53,596.30 M121.69,594.68 L123.31,596.03" stroke="#e8a040" stroke-width="0.81"/><polygon points="113.59,586.04 107.65,595.76 109.27,598.19 111.16,596.84 113.05,599.00 114.94,597.11 118.45,594.14" fill="#2a68b0"/><ellipse cx="119.26" cy="588.20" rx="7.16" ry="7.29" fill="#2d6fb8"/><ellipse cx="121.96" cy="588.74" rx="4.05" ry="5.40" fill="#3f80c8"/><circle cx="118.72" cy="577.94" r="5.67" fill="#2d6fb8"/><polygon points="115.75,573.62 118.45,571.73 121.15,573.35" fill="#2d6fb8"/><polygon points="122.50,576.59 126.82,579.02 123.04,580.91" fill="#f0a23a"/><path d="M98.05,605.98 L99.13,607.60 M101.29,605.98 L102.91,607.33" stroke="#e8a040" stroke-width="0.81"/><polygon points="93.19,597.34 87.25,607.06 88.87,609.49 90.76,608.14 92.65,610.30 94.54,608.41 98.05,605.44" fill="#2a68b0"/><ellipse cx="98.86" cy="599.50" rx="7.16" ry="7.29" fill="#2d6fb8"/><ellipse cx="101.56" cy="600.04" rx="4.05" ry="5.40" fill="#3f80c8"/><circle cx="98.32" cy="589.24" r="5.67" fill="#2d6fb8"/><polygon points="95.35,584.92 98.05,583.03 100.75,584.65" fill="#2d6fb8"/><polygon points="102.10,587.89 106.42,590.32 102.64,592.21" fill="#f0a23a"/><path d="M48.88,592.82 L49.42,593.64 M50.51,592.82 L51.33,593.50" stroke="#e8a040" stroke-width="0.41"/><polygon points="46.43,588.47 43.44,593.37 44.26,594.59 45.21,593.91 46.16,595.00 47.11,594.05 48.88,592.55" fill="#2a68b0"/><ellipse cx="49.29" cy="589.56" rx="3.60" ry="3.67" fill="#2d6fb8"/><ellipse cx="50.65" cy="589.83" rx="2.04" ry="2.72" fill="#3f80c8"/><circle cx="49.02" cy="584.39" r="2.86" fill="#2d6fb8"/><polygon points="47.52,582.22 48.88,581.26 50.24,582.08" fill="#2d6fb8"/><polygon points="50.92,583.71 53.10,584.94 51.19,585.89" fill="#f0a23a"/><path d="M61.78,592.82 L62.32,593.64 M63.41,592.82 L64.23,593.50" stroke="#e8a040" stroke-width="0.41"/><polygon points="59.33,588.47 56.34,593.37 57.16,594.59 58.11,593.91 59.06,595.00 60.01,594.05 61.78,592.55" fill="#2a68b0"/><ellipse cx="62.19" cy="589.56" rx="3.60" ry="3.67" fill="#2d6fb8"/><ellipse cx="63.55" cy="589.83" rx="2.04" ry="2.72" fill="#3f80c8"/><circle cx="61.92" cy="584.39" r="2.86" fill="#2d6fb8"/><polygon points="60.42,582.22 61.78,581.26 63.14,582.08" fill="#2d6fb8"/><polygon points="63.82,583.71 66.00,584.94 64.09,585.89" fill="#f0a23a"/><path d="M74.58,591.62 L75.12,592.44 M76.21,591.62 L77.03,592.30" stroke="#e8a040" stroke-width="0.41"/><polygon points="72.13,587.27 69.14,592.17 69.96,593.39 70.91,592.71 71.86,593.80 72.81,592.85 74.58,591.35" fill="#2a68b0"/><ellipse cx="74.99" cy="588.36" rx="3.60" ry="3.67" fill="#2d6fb8"/><ellipse cx="76.35" cy="588.63" rx="2.04" ry="2.72" fill="#3f80c8"/><circle cx="74.72" cy="583.19" r="2.86" fill="#2d6fb8"/><polygon points="73.22,581.02 74.58,580.06 75.94,580.88" fill="#2d6fb8"/><polygon points="76.62,582.51 78.80,583.74 76.89,584.69" fill="#f0a23a"/><path d="M82.98,598.82 L83.52,599.64 M84.61,598.82 L85.43,599.50" stroke="#e8a040" stroke-width="0.41"/><polygon points="80.53,594.47 77.54,599.37 78.36,600.59 79.31,599.91 80.26,601.00 81.21,600.05 82.98,598.55" fill="#2a68b0"/><ellipse cx="83.39" cy="595.56" rx="3.60" ry="3.67" fill="#2d6fb8"/><ellipse cx="84.75" cy="595.83" rx="2.04" ry="2.72" fill="#3f80c8"/><circle cx="83.12" cy="590.39" r="2.86" fill="#2d6fb8"/><polygon points="81.62,588.22 82.98,587.26 84.34,588.08" fill="#2d6fb8"/><polygon points="85.02,589.71 87.20,590.94 85.29,591.89" fill="#f0a23a"/><path d="M48.88,609.02 L49.42,609.84 M50.51,609.02 L51.33,609.70" stroke="#e8a040" stroke-width="0.41"/><polygon points="46.43,604.67 43.44,609.57 44.26,610.79 45.21,610.11 46.16,611.20 47.11,610.25 48.88,608.75" fill="#2a68b0"/><ellipse cx="49.29" cy="605.76" rx="3.60" ry="3.67" fill="#2d6fb8"/><ellipse cx="50.65" cy="606.03" rx="2.04" ry="2.72" fill="#3f80c8"/><circle cx="49.02" cy="600.59" r="2.86" fill="#2d6fb8"/><polygon points="47.52,598.42 48.88,597.46 50.24,598.28" fill="#2d6fb8"/><polygon points="50.92,599.91 53.10,601.14 51.19,602.09" fill="#f0a23a"/><path d="M61.78,610.52 L62.32,611.34 M63.41,610.52 L64.23,611.20" stroke="#e8a040" stroke-width="0.41"/><polygon points="59.33,606.17 56.34,611.07 57.16,612.29 58.11,611.61 59.06,612.70 60.01,611.75 61.78,610.25" fill="#2a68b0"/><ellipse cx="62.19" cy="607.26" rx="3.60" ry="3.67" fill="#2d6fb8"/><ellipse cx="63.55" cy="607.53" rx="2.04" ry="2.72" fill="#3f80c8"/><circle cx="61.92" cy="602.09" r="2.86" fill="#2d6fb8"/><polygon points="60.42,599.92 61.78,598.96 63.14,599.78" fill="#2d6fb8"/><polygon points="63.82,601.41 66.00,602.64 64.09,603.59" fill="#f0a23a"/><path d="M74.58,612.52 L75.12,613.34 M76.21,612.52 L77.03,613.20" stroke="#e8a040" stroke-width="0.41"/><polygon points="72.13,608.17 69.14,613.07 69.96,614.29 70.91,613.61 71.86,614.70 72.81,613.75 74.58,612.25" fill="#2a68b0"/><ellipse cx="74.99" cy="609.26" rx="3.60" ry="3.67" fill="#2d6fb8"/><ellipse cx="76.35" cy="609.53" rx="2.04" ry="2.72" fill="#3f80c8"/><circle cx="74.72" cy="604.09" r="2.86" fill="#2d6fb8"/><polygon points="73.22,601.92 74.58,600.96 75.94,601.78" fill="#2d6fb8"/><polygon points="76.62,603.41 78.80,604.64 76.89,605.59" fill="#f0a23a"/><path d="M114.78,612.52 L115.32,613.34 M116.41,612.52 L117.23,613.20" stroke="#e8a040" stroke-width="0.41"/><polygon points="112.33,608.17 109.34,613.07 110.16,614.29 111.11,613.61 112.06,614.70 113.01,613.75 114.78,612.25" fill="#2a68b0"/><ellipse cx="115.19" cy="609.26" rx="3.60" ry="3.67" fill="#2d6fb8"/><ellipse cx="116.55" cy="609.53" rx="2.04" ry="2.72" fill="#3f80c8"/><circle cx="114.92" cy="604.09" r="2.86" fill="#2d6fb8"/><polygon points="113.42,601.92 114.78,600.96 116.14,601.78" fill="#2d6fb8"/><polygon points="116.82,603.41 119.00,604.64 117.09,605.59" fill="#f0a23a"/><rect x="42.10" y="675.60" width="84.90" height="113.90" fill="none" stroke="#9c9c9c" stroke-width="0.5"/><rect x="47.40" y="678.30" width="74.70" height="20.30" fill="#efefef" stroke="#222" stroke-width="0.9"/><path d="M62.25,697.82 L63.17,699.20 M65.01,697.82 L66.39,698.97" stroke="#e8a040" stroke-width="0.69"/><polygon points="58.11,690.46 53.05,698.74 54.43,700.81 56.04,699.66 57.65,701.50 59.26,699.89 62.25,697.36" fill="#2a68b0"/><ellipse cx="62.94" cy="692.30" rx="6.10" ry="6.21" fill="#2d6fb8"/><ellipse cx="65.24" cy="692.76" rx="3.45" ry="4.60" fill="#3f80c8"/><circle cx="62.48" cy="683.56" r="4.83" fill="#2d6fb8"/><polygon points="59.95,679.88 62.25,678.27 64.55,679.65" fill="#2d6fb8"/><polygon points="65.70,682.41 69.38,684.48 66.16,686.09" fill="#f0a23a"/><text x="84.90" y="692.60" font-family="Liberation Sans, DejaVu Sans, sans-serif" font-size="11" font-weight="bold" text-anchor="middle" fill="#111" stroke="#111" stroke-width=".3">Big</text><rect x="96.70" y="691.50" width="4.2" height="3.8" rx=".5" fill="#d9263a" stroke="#8a1020" stroke-width=".4"/><rect x="102.00" y="690.00" width="6" height="5.3" rx=".6" fill="#f0a52e" stroke="#b87412" stroke-width=".4"/><rect x="109.10" y="687.70" width="8.800" height="7.600" rx=".7" fill="#3fba43" stroke="#1f7f24" stroke-width=".5"/><path d="M109.10,687.70l1.500,-1.300l7.300,0l0,6.300l-1.500,1.300" fill="none" stroke="#1f7f24" stroke-width=".4"/><path d="M114.40,681.20V685.10" stroke="#111" stroke-width=".8"/><polygon points="113.00,684.40 115.80,684.40 114.40,686.60" fill="#111"/><rect x="55.60" y="715.60" width="4.200" height="4.200" fill="#f4f4f4" stroke="#b4b4b4" stroke-width=".6"/><rect x="106.70" y="711.10" width="4.200" height="4.200" fill="#f4f4f4" stroke="#b4b4b4" stroke-width=".6"/><rect x="78.40" y="735.00" width="4.200" height="4.200" fill="#f4f4f4" stroke="#b4b4b4" stroke-width=".6"/><rect x="111.20" y="742.40" width="4.200" height="4.200" fill="#f4f4f4" stroke="#b4b4b4" stroke-width=".6"/><rect x="51.40" y="760.20" width="4.200" height="4.200" fill="#f4f4f4" stroke="#b4b4b4" stroke-width=".6"/><rect x="89.30" y="769.00" width="4.200" height="4.200" fill="#f4f4f4" stroke="#b4b4b4" stroke-width=".6"/><rect x="42.10" y="849.30" width="84.90" height="114.20" fill="none" stroke="#9c9c9c" stroke-width="0.5"/><rect x="47.40" y="852.30" width="74.70" height="20.30" fill="#efefef" stroke="#222" stroke-width="0.9"/><path d="M59.40,866.58 L59.88,867.30 M60.84,866.58 L61.56,867.18" stroke="#e8a040" stroke-width="0.36"/><polygon points="57.24,862.74 54.60,867.06 55.32,868.14 56.16,867.54 57.00,868.50 57.84,867.66 59.40,866.34" fill="#2a68b0"/><ellipse cx="59.76" cy="863.70" rx="3.18" ry="3.24" fill="#2d6fb8"/><ellipse cx="60.96" cy="863.94" rx="1.80" ry="2.40" fill="#3f80c8"/><circle cx="59.52" cy="859.14" r="2.52" fill="#2d6fb8"/><polygon points="58.20,857.22 59.40,856.38 60.60,857.10" fill="#2d6fb8"/><polygon points="61.20,858.54 63.12,859.62 61.44,860.46" fill="#f0a23a"/><text x="80.40" y="866.30" font-family="Liberation Sans, DejaVu Sans, sans-serif" font-size="10.6" font-weight="bold" text-anchor="middle" fill="#111" stroke="#111" stroke-width=".3">Little</text><rect x="96.70" y="865.50" width="4.2" height="3.8" rx=".5" fill="#d9263a" stroke="#8a1020" stroke-width=".4"/><rect x="102.00" y="864.00" width="6" height="5.3" rx=".6" fill="#f0a52e" stroke="#b87412" stroke-width=".4"/><rect x="109.10" y="861.70" width="8.800" height="7.600" rx=".7" fill="#3fba43" stroke="#1f7f24" stroke-width=".5"/><path d="M109.10,861.70l1.500,-1.300l7.300,0l0,6.300l-1.500,1.300" fill="none" stroke="#1f7f24" stroke-width=".4"/><path d="M99.40,857.30V861.70" stroke="#111" stroke-width=".8"/><polygon points="98.00,861.00 100.80,861.00 99.40,863.20" fill="#111"/><rect x="53.40" y="885.10" width="4.200" height="4.200" fill="#f4f4f4" stroke="#b4b4b4" stroke-width=".6"/><rect x="110.90" y="883.40" width="4.200" height="4.200" fill="#f4f4f4" stroke="#b4b4b4" stroke-width=".6"/><rect x="78.70" y="894.00" width="4.200" height="4.200" fill="#f4f4f4" stroke="#b4b4b4" stroke-width=".6"/><rect x="56.40" y="909.30" width="4.200" height="4.200" fill="#f4f4f4" stroke="#b4b4b4" stroke-width=".6"/><rect x="82.40" y="922.20" width="4.200" height="4.200" fill="#f4f4f4" stroke="#b4b4b4" stroke-width=".6"/><rect x="110.90" y="928.60" width="4.200" height="4.200" fill="#f4f4f4" stroke="#b4b4b4" stroke-width=".6"/><rect x="66.20" y="938.10" width="4.200" height="4.200" fill="#f4f4f4" stroke="#b4b4b4" stroke-width=".6"/><rect x="92.00" y="948.70" width="4.200" height="4.200" fill="#f4f4f4" stroke="#b4b4b4" stroke-width=".6"/><text x="65.30" y="1026.80" font-family="Liberation Sans, DejaVu Sans, sans-serif" font-size="1.6" font-weight="normal" text-anchor="middle" fill="#888">Main Title</text><text x="110.50" y="1026.80" font-family="Liberation Sans, DejaVu Sans, sans-serif" font-size="1.6" font-weight="normal" text-anchor="middle" fill="#888">Tab Title</text><text x="110.50" y="1057.20" font-family="Liberation Sans, DejaVu Sans, sans-serif" font-size="1.6" font-weight="normal" text-anchor="middle" fill="#888">Straight Title</text><rect x="41.10" y="1028.80" width="50.40" height="42.20" fill="none" stroke="#222" stroke-width="0.5"/><text x="66.30" y="1036.00" font-family="Liberation Sans, DejaVu Sans, sans-serif" font-size="4.6" font-weight="bold" text-anchor="middle" fill="#111">Sort Big &amp; Little</text><text x="66.30" y="1041.50" font-family="Liberation Sans, DejaVu Sans, sans-serif" font-size="4.6" font-weight="bold" text-anchor="middle" fill="#111">Soccer Balls</text><circle cx="60.10" cy="1051.40" r="7.20" fill="#f4f4f4" stroke="#111" stroke-width="1.15"/><circle cx="60.10" cy="1051.40" r="2.16" fill="#111"/><circle cx="63.40" cy="1046.86" r="1.73" fill="#111"/><circle cx="65.44" cy="1053.14" r="1.73" fill="#111"/><circle cx="60.10" cy="1057.02" r="1.73" fill="#111"/><circle cx="54.76" cy="1053.14" r="1.73" fill="#111"/><circle cx="56.80" cy="1046.86" r="1.73" fill="#111"/><circle cx="74.20" cy="1052.90" r="4.00" fill="#f4f4f4" stroke="#111" stroke-width="0.64"/><circle cx="74.20" cy="1052.90" r="1.20" fill="#111"/><circle cx="76.03" cy="1050.38" r="0.96" fill="#111"/><circle cx="77.17" cy="1053.86" r="0.96" fill="#111"/><circle cx="74.20" cy="1056.02" r="0.96" fill="#111"/><circle cx="71.23" cy="1053.86" r="0.96" fill="#111"/><circle cx="72.37" cy="1050.38" r="0.96" fill="#111"/><rect x="93.00" y="1029.30" width="35.00" height="6.70" fill="none" stroke="#222" stroke-width="0.5"/><circle cx="101.50" cy="1032.60" r="2.00" fill="#f4f4f4" stroke="#111" stroke-width="0.32"/><circle cx="101.50" cy="1032.60" r="0.60" fill="#111"/><circle cx="102.42" cy="1031.34" r="0.48" fill="#111"/><circle cx="102.98" cy="1033.08" r="0.48" fill="#111"/><circle cx="101.50" cy="1034.16" r="0.48" fill="#111"/><circle cx="100.02" cy="1033.08" r="0.48" fill="#111"/><circle cx="100.58" cy="1031.34" r="0.48" fill="#111"/><text x="117.50" y="1032.10" font-family="Liberation Sans, DejaVu Sans, sans-serif" font-size="1.8" font-weight="bold" text-anchor="middle" fill="#111">Sort Big &amp; Little</text><text x="117.50" y="1034.20" font-family="Liberation Sans, DejaVu Sans, sans-serif" font-size="1.8" font-weight="bold" text-anchor="middle" fill="#111">Soccer Balls</text><rect x="93.00" y="1037.80" width="35.00" height="15.60" fill="none" stroke="#222" stroke-width="0.5"/><circle cx="102.80" cy="1045.50" r="3.60" fill="#f4f4f4" stroke="#111" stroke-width="0.58"/><circle cx="102.80" cy="1045.50" r="1.08" fill="#111"/><circle cx="104.45" cy="1043.23" r="0.86" fill="#111"/><circle cx="105.47" cy="1046.37" r="0.86" fill="#111"/><circle cx="102.80" cy="1048.31" r="0.86" fill="#111"/><circle cx="100.13" cy="1046.37" r="0.86" fill="#111"/><circle cx="101.15" cy="1043.23" r="0.86" fill="#111"/><text x="117.70" y="1041.50" font-family="Liberation Sans, DejaVu Sans, sans-serif" font-size="2.4" font-weight="bold" text-anchor="middle" fill="#111">Sort Big &amp;</text><text x="117.70" y="1044.60" font-family="Liberation Sans, DejaVu Sans, sans-serif" font-size="2.4" font-weight="bold" text-anchor="middle" fill="#111">Little</text><text x="117.70" y="1047.70" font-family="Liberation Sans, DejaVu Sans, sans-serif" font-size="2.4" font-weight="bold" text-anchor="middle" fill="#111">Soccer</text><text x="117.70" y="1050.80" font-family="Liberation Sans, DejaVu Sans, sans-serif" font-size="2.4" font-weight="bold" text-anchor="middle" fill="#111">Balls</text></svg><div class="abs" style="left:77.300px;top:254.600px;width:14.200px;height:18.600px;border-radius:4px;background:#2060cf"></div><div class="tlabel" style="top:256px;color:#fff;font-size:13.5px;margin-top:.8px;margin-left:.2px">1</div><div class="tlabel" style="top:429.3px">2</div><div class="tlabel" style="top:603.3px">3</div><div class="tlabel" style="top:777.4px">4</div><div class="tlabel" style="top:951.4px">5</div>
    <div class="abs" style="left:0;top:1031px;width:172px;height:32px;background:#cdc6b8;border-top:1px solid #c4bdae"></div>
    <svg style="left:10px;top:1040px" width="15" height="15" viewBox="0 0 15 15" fill="none" stroke="#6f6a60" stroke-width="1.1" stroke-linecap="round"><circle cx="7.5" cy="7.5" r="6.6"/><path d="M7.5 4.5v6M4.5 7.5h6"/></svg>
    <div class="abs" style="left:170px;top:0;width:2px;height:1063px;background:linear-gradient(90deg,rgba(255,255,255,.12),rgba(120,120,120,.25))"></div>
  </div>
  <div id="toolbar" class="abs">
    <div class="abs" style="left:0;top:56px;width:1774px;height:1px;background:#d2d2d2"></div>
    <div class="abs" style="left:0;top:57px;width:1774px;height:1px;background:#c5c5c5"></div>
    <!-- sidebar toggle -->
    <svg style="left:23px;top:20px" width="24" height="19" viewBox="0 0 24 19" fill="none" stroke="#4a4a4a" stroke-width="1.5"><rect x=".9" y="1.4" width="20.4" height="15.6" rx="2.6"/><path d="M7.6 1.4v15.6"/><path d="M3 5.2h2.6M3 7.8h2.6M3 10.4h2.6" stroke-width="1.1"/></svg>
    <svg style="left:53px;top:26px" width="10" height="7" viewBox="0 0 10 7" fill="none" stroke="#4a4a4a" stroke-width="1.8" stroke-linecap="round" stroke-linejoin="round"><path d="M1.2 1.4L5 5.2l3.8-3.8"/></svg>
    <div id="tb_title" class="abs" style="left:80.4px;top:13px;font-size:14.3px;line-height:18px;letter-spacing:.17px;font-weight:bold;color:#3a3a3a;white-space:nowrap">Color, Size, Type File Folders</div>
    <div id="tb_sub" class="abs" style="left:80.4px;top:31px;font-size:11.9px;line-height:14px;letter-spacing:.38px;color:#4c4c4c;white-space:nowrap">Page 1 of 82</div>
    <!-- info -->
    <svg style="left:996px;top:19px" width="20" height="20" viewBox="0 0 20 20" fill="none" stroke="#4a4a4a"><circle cx="10" cy="10" r="8.600" stroke-width="1.550"/><circle cx="10" cy="5.900" r="1.350" fill="#4a4a4a" stroke="none"/><path d="M8.300 9h1.900v5M7.900 14.200h4.400" stroke-width="1.700" stroke-linecap="round" stroke-linejoin="round"/></svg>
    <!-- zoom out -->
    <svg style="left:1044px;top:19px" width="20" height="20" viewBox="0 0 20 20" fill="none" stroke="#4a4a4a" stroke-linecap="round"><circle cx="8.2" cy="8" r="6.4" stroke-width="1.5"/><path d="M12.9 12.7l5 5" stroke-width="2.1"/><path d="M5.5 8h5.4" stroke-width="1.4"/></svg>
    <!-- zoom in -->
    <svg style="left:1085px;top:19px" width="20" height="20" viewBox="0 0 20 20" fill="none" stroke="#4a4a4a" stroke-linecap="round"><circle cx="8.2" cy="8" r="6.4" stroke-width="1.5"/><path d="M12.9 12.7l5 5" stroke-width="2.1"/><path d="M5.5 8h5.4M8.2 5.3v5.4" stroke-width="1.4"/></svg>
    <!-- share -->
    <svg style="left:1131px;top:17px" width="18" height="23" viewBox="0 0 18 23" fill="none" stroke="#4a4a4a" stroke-width="1.5" stroke-linecap="round" stroke-linejoin="round"><path d="M5.6 9H3.6a2 2 0 0 0-2 2v8.2a2 2 0 0 0 2 2h10.8a2 2 0 0 0 2-2V11a2 2 0 0 0-2-2h-2"/><path d="M9 14.200V2.600M5.400 6L9 2.400l3.600 3.600"/></svg>
    <!-- highlight pen -->
    <svg style="left:1186px;top:18px" width="21" height="21" viewBox="0 0 21 21" fill="none" stroke="#4a4a4a" stroke-width="1.4" stroke-linecap="round" stroke-linejoin="round"><path d="M14.400 1.800l3.400 3.400L7.600 15.400l-4.900 1.500 1.500-4.900z"/><path d="M12.400 3.800l3.400 3.400M13.500 2.700l3.400 3.400" stroke-width="1.100"/><path d="M1.2 19.6h18.6" stroke-width="1.5"/></svg>
    <div class="abs" style="left:1219px;top:18px;width:1px;height:22px;background:#c2c2c2"></div>
    <svg style="left:1230px;top:26px" width="10" height="7" viewBox="0 0 10 7" fill="none" stroke="#4a4a4a" stroke-width="1.8" stroke-linecap="round" stroke-linejoin="round"><path d="M1.4 1.4L5 5l3.6-3.6"/></svg>
    <!-- rotate -->
    <svg style="left:1268px;top:17px" width="20" height="21" viewBox="0 0 20 21" fill="none" stroke="#4a4a4a" stroke-width="1.5" stroke-linecap="round" stroke-linejoin="round"><rect x="1.4" y="7.4" width="12.4" height="12" rx="2.2"/><path d="M11.4 3.4h2.8a3.8 3.8 0 0 1 3.8 3.8v2"/><path d="M13.6 1l-2.6 2.4 2.6 2.4" /></svg>
    <!-- markup -->
    <svg style="left:1312px;top:19px" width="20" height="20" viewBox="0 0 20 20" fill="none" stroke="#4a4a4a" stroke-linecap="round" stroke-linejoin="round"><circle cx="10" cy="10" r="8.600" stroke-width="1.500"/><path d="M6.900 16.800L10 5.400l3.100 11.400M8 12.600h4" stroke-width="1.400"/><path d="M10 5.400L8.700 10h2.600z" fill="#4a4a4a" stroke-width="1"/></svg>
    <!-- form fill -->
    <svg style="left:1360px;top:18px" width="30" height="21" viewBox="0 0 30 21" fill="none" stroke="#4a4a4a" stroke-width="1.600" stroke-linecap="round" stroke-linejoin="round"><path d="M18.500 6.200H3.800a2.200 2.200 0 0 0-2.200 2.200v7.600a2.200 2.200 0 0 0 2.200 2.200h18a2.200 2.200 0 0 0 2.200-2.200v-5.600"/><path d="M5.400 12.600h.1M8.500 12.600h.1M11.600 12.600h.1" stroke-width="2.200"/><path d="M14.300 12.600h2" stroke-width="1.600"/><path d="M27.200 1.800L18.800 11.400" stroke-width="2.300"/><path d="M18.800 11.400l-1.600 1.800" stroke-width="1.200"/></svg>
    <!-- search -->
    <div class="abs" style="left:1408px;top:14.200px;width:352.600px;height:30px;border-radius:7px;background:#d3d3d3;border:1px solid #c7c7c7"></div>
    <svg style="left:1413px;top:21.500px" width="21.600" height="15.300" viewBox="0 0 24 17" fill="none" stroke="#5a5a5a" stroke-width="1.5" stroke-linecap="round" stroke-linejoin="round"><circle cx="6.6" cy="6.8" r="5"/><path d="M10.3 10.600l4.4 4.500"/><path d="M15.8 6.400l2.600 2.500 2.600-2.500" stroke-width="1.4"/></svg>
    <div id="tb_search" class="abs" style="left:1437.6px;top:21.8px;font-size:14.6px;line-height:18px;letter-spacing:-.45px;color:#a6a6a6">Search</div>
  </div>
  <div id="autofill" class="abs">
    <div id="af_text" class="abs" style="left:11px;top:8.2px;font-size:12.2px;line-height:14px;letter-spacing:.33px;color:#3c3c3c;white-space:nowrap">AutoFill can assist with filling out this form.</div>
    <div class="abs" style="left:1644.300px;top:6.400px;width:93.100px;height:17px;border-radius:5px;background:#bebebe"></div>
    <div id="af_btn" class="abs" style="left:1654px;top:8px;font-size:12.1px;line-height:14px;letter-spacing:.3px;color:#2e2e2e;white-space:nowrap">AutoFill Form</div>
    <svg style="left:1749.500px;top:8.700px" width="12" height="12" viewBox="0 0 13 13" fill="none" stroke="#3a3a3a" stroke-width="1.3" stroke-linecap="round"><path d="M1.2 1.2l10.600 10.600M11.800 1.200L1.200 11.800"/></svg>
    <div class="abs" style="left:0;top:28.5px;width:1774px;height:1.5px;background:#d4d4d4"></div>
  </div>
<div id="content" class="abs"><div class="abs" style="left:0;top:0;width:1774px;height:4px;background:linear-gradient(180deg,#6e6e6e,#7a7a7a 40%,#888)"></div><div class="page abs" id="page1" style="left:581px;top:4px;width:612px;height:816px"></div><div class="page abs" id="page2" style="left:581px;top:828px;width:612px;height:200px"></div><svg class="gs" style="left:-172px;top:-114px" width="1946" height="1089" viewBox="0 0 1946 1089"><defs><linearGradient id="hdrg" x1="0" y1="0" x2="0" y2="1"><stop offset="0" stop-color="#dcdcdc"/><stop offset="1" stop-color="#cfcfcf"/></linearGradient></defs><g transform="translate(753,118)"><rect x="106.5" y="132" width="399" height="399.3" fill="none" stroke="#111111" stroke-width="4.2"/><g transform="translate(117,147) scale(0.13311)"><polygon points="447.0,92.0 412.0,204.0 485.0,212.0" fill="#e2402f"/><polygon points="447.0,92.0 452.0,210.0 485.0,212.0" fill="#f0603c"/><polygon points="447.0,92.0 485.0,212.0 547.0,154.0" fill="#c41f2b"/><polygon points="447.0,92.0 412.0,204.0 485.0,212.0 547.0,154.0" fill="none" stroke="#3a0d0d" stroke-width="7" stroke-linejoin="round"/><path d="M447.0,92.0L485.0,212.0" stroke="#3a0d0d" stroke-width="5"/><path d="M447.0,92.0L452.0,210.0" stroke="#7a1515" stroke-width="2.5"/><polygon points="598.0,85.0 563.0,197.0 636.0,205.0" fill="#e2402f"/><polygon points="598.0,85.0 603.0,203.0 636.0,205.0" fill="#f0603c"/><polygon points="598.0,85.0 636.0,205.0 698.0,147.0" fill="#c41f2b"/><polygon points="598.0,85.0 563.0,197.0 636.0,205.0 698.0,147.0" fill="none" stroke="#3a0d0d" stroke-width="7" stroke-linejoin="round"/><path d="M598.0,85.0L636.0,205.0" stroke="#3a0d0d" stroke-width="5"/><path d="M598.0,85.0L603.0,203.0" stroke="#7a1515" stroke-width="2.5"/><polygon points="375.0,170.0 340.0,282.0 413.0,290.0" fill="#e2402f"/><polygon points="375.0,170.0 380.0,288.0 413.0,290.0" fill="#f0603c"/><polygon points="375.0,170.0 413.0,290.0 475.0,232.0" fill="#c41f2b"/><polygon points="375.0,170.0 340.0,282.0 413.0,290.0 475.0,232.0" fill="none" stroke="#3a0d0d" stroke-width="7" stroke-linejoin="round"/><path d="M375.0,170.0L413.0,290.0" stroke="#3a0d0d" stroke-width="5"/><path d="M375.0,170.0L380.0,288.0" stroke="#7a1515" stroke-width="2.5"/><polygon points="518.0,175.0 483.0,287.0 556.0,295.0" fill="#e2402f"/><polygon points="518.0,175.0 523.0,293.0 556.0,295.0" fill="#f0603c"/><polygon points="518.0,175.0 556.0,295.0 618.0,237.0" fill="#c41f2b"/><polygon points="518.0,175.0 483.0,287.0 556.0,295.0 618.0,237.0" fill="none" stroke="#3a0d0d" stroke-width="7" stroke-linejoin="round"/><path d="M518.0,175.0L556.0,295.0" stroke="#3a0d0d" stroke-width="5"/><path d="M518.0,175.0L523.0,293.0" stroke="#7a1515" stroke-width="2.5"/><polygon points="798.0,157.0 868.0,133.0 926.0,157.0 852.0,187.0" fill="#6f93d2"/><polygon points="798.0,157.0 852.0,187.0 858.0,263.0 808.0,237.0" fill="#5277bf"/><polygon points="852.0,187.0 926.0,157.0 918.0,225.0 858.0,263.0" fill="#3b5da6"/><polygon points="798.0,157.0 868.0,133.0 926.0,157.0 918.0,225.0 858.0,263.0 808.0,237.0" fill="none" stroke="#16224a" stroke-width="7" stroke-linejoin="round"/><path d="M798.0,157.0L852.0,187.0L926.0,157.0M852.0,187.0L858.0,263.0" fill="none" stroke="#16224a" stroke-width="5" stroke-linejoin="round"/><polygon points="938.0,177.0 1008.0,153.0 1066.0,177.0 992.0,207.0" fill="#6f93d2"/><polygon points="938.0,177.0 992.0,207.0 998.0,283.0 948.0,257.0" fill="#5277bf"/><polygon points="992.0,207.0 1066.0,177.0 1058.0,245.0 998.0,283.0" fill="#3b5da6"/><polygon points="938.0,177.0 1008.0,153.0 1066.0,177.0 1058.0,245.0 998.0,283.0 948.0,257.0" fill="none" stroke="#16224a" stroke-width="7" stroke-linejoin="round"/><path d="M938.0,177.0L992.0,207.0L1066.0,177.0M992.0,207.0L998.0,283.0" fill="none" stroke="#16224a" stroke-width="5" stroke-linejoin="round"/><polygon points="723.0,257.0 793.0,233.0 851.0,257.0 777.0,287.0" fill="#6f93d2"/><polygon points="723.0,257.0 777.0,287.0 783.0,363.0 733.0,337.0" fill="#5277bf"/><polygon points="777.0,287.0 851.0,257.0 843.0,325.0 783.0,363.0" fill="#3b5da6"/><polygon points="723.0,257.0 793.0,233.0 851.0,257.0 843.0,325.0 783.0,363.0 733.0,337.0" fill="none" stroke="#16224a" stroke-width="7" stroke-linejoin="round"/><path d="M723.0,257.0L777.0,287.0L851.0,257.0M777.0,287.0L783.0,363.0" fill="none" stroke="#16224a" stroke-width="5" stroke-linejoin="round"/><polygon points="841.8,263.2 918.8,236.8 982.6,263.2 901.2,296.2" fill="#6f93d2"/><polygon points="841.8,263.2 901.2,296.2 907.8,379.8 852.8,351.2" fill="#5277bf"/><polygon points="901.2,296.2 982.6,263.2 973.8,338.0 907.8,379.8" fill="#3b5da6"/><polygon points="841.8,263.2 918.8,236.8 982.6,263.2 973.8,338.0 907.8,379.8 852.8,351.2" fill="none" stroke="#16224a" stroke-width="7" stroke-linejoin="round"/><path d="M841.8,263.2L901.2,296.2L982.6,263.2M901.2,296.2L907.8,379.8" fill="none" stroke="#16224a" stroke-width="5" stroke-linejoin="round"/><circle cx="228.0" cy="455.0" r="58.0" fill="#e9b63a" stroke="#4a3206" stroke-width="7"/><circle cx="219.3" cy="443.4" r="36.0" fill="#f3cf62"/><circle cx="210.6" cy="433.0" r="14.5" fill="#f8e08a"/><circle cx="372.0" cy="447.0" r="58.0" fill="#e9b63a" stroke="#4a3206" stroke-width="7"/><circle cx="363.3" cy="435.4" r="36.0" fill="#f3cf62"/><circle cx="354.6" cy="425.0" r="14.5" fill="#f8e08a"/><circle cx="155.0" cy="527.0" r="58.0" fill="#e9b63a" stroke="#4a3206" stroke-width="7"/><circle cx="146.3" cy="515.4" r="36.0" fill="#f3cf62"/><circle cx="137.6" cy="505.0" r="14.5" fill="#f8e08a"/><circle cx="285.0" cy="540.0" r="58.0" fill="#e9b63a" stroke="#4a3206" stroke-width="7"/><circle cx="276.3" cy="528.4" r="36.0" fill="#f3cf62"/><circle cx="267.6" cy="518.0" r="14.5" fill="#f8e08a"/><path d="M515.0,702.0L434.4,623.5" stroke="#0d0d0d" stroke-width="18" stroke-linecap="round"/><polygon points="400.0,590.0 457.4,599.8 426.6,616.0 411.4,647.1" fill="#0d0d0d" stroke="#0d0d0d" stroke-width="4" stroke-linejoin="round"/><path d="M646.0,568.0L606.2,457.2" stroke="#0d0d0d" stroke-width="18" stroke-linecap="round"/><polygon points="590.0,412.0 637.3,446.0 602.6,447.0 575.2,468.3" fill="#0d0d0d" stroke="#0d0d0d" stroke-width="4" stroke-linejoin="round"/><path d="M835.0,595.0L845.6,479.8" stroke="#0d0d0d" stroke-width="18" stroke-linecap="round"/><polygon points="850.0,432.0 878.5,482.8 846.6,469.0 812.7,476.8" fill="#0d0d0d" stroke="#0d0d0d" stroke-width="4" stroke-linejoin="round"/><polygon points="828.0,648.0 794.8,754.4 864.1,762.0" fill="#e2402f"/><polygon points="828.0,648.0 832.8,760.1 864.1,762.0" fill="#f0603c"/><polygon points="828.0,648.0 864.1,762.0 923.0,706.9" fill="#c41f2b"/><polygon points="828.0,648.0 794.8,754.4 864.1,762.0 923.0,706.9" fill="none" stroke="#3a0d0d" stroke-width="7" stroke-linejoin="round"/><path d="M828.0,648.0L864.1,762.0" stroke="#3a0d0d" stroke-width="5"/><path d="M828.0,648.0L832.8,760.1" stroke="#7a1515" stroke-width="2.5"/><circle cx="750.0" cy="690.0" r="50.0" fill="#e9b63a" stroke="#4a3206" stroke-width="7"/><circle cx="742.5" cy="680.0" r="31.0" fill="#f3cf62"/><circle cx="735.0" cy="671.0" r="12.5" fill="#f8e08a"/><polygon points="609.2,705.8 672.2,684.2 724.4,705.8 657.8,732.8" fill="#6f93d2"/><polygon points="609.2,705.8 657.8,732.8 663.2,801.2 618.2,777.8" fill="#5277bf"/><polygon points="657.8,732.8 724.4,705.8 717.2,767.0 663.2,801.2" fill="#3b5da6"/><polygon points="609.2,705.8 672.2,684.2 724.4,705.8 717.2,767.0 663.2,801.2 618.2,777.8" fill="none" stroke="#16224a" stroke-width="7" stroke-linejoin="round"/><path d="M609.2,705.8L657.8,732.8L724.4,705.8M657.8,732.8L663.2,801.2" fill="none" stroke="#16224a" stroke-width="5" stroke-linejoin="round"/><polygon points="476.1,793.9 542.6,771.1 597.7,793.9 527.4,822.4" fill="#6f93d2"/><polygon points="476.1,793.9 527.4,822.4 533.1,894.6 485.6,869.9" fill="#5277bf"/><polygon points="527.4,822.4 597.7,793.9 590.1,858.5 533.1,894.6" fill="#3b5da6"/><polygon points="476.1,793.9 542.6,771.1 597.7,793.9 590.1,858.5 533.1,894.6 485.6,869.9" fill="none" stroke="#16224a" stroke-width="7" stroke-linejoin="round"/><path d="M476.1,793.9L527.4,822.4L597.7,793.9M527.4,822.4L533.1,894.6" fill="none" stroke="#16224a" stroke-width="5" stroke-linejoin="round"/><circle cx="930.0" cy="800.0" r="58.0" fill="#e9b63a" stroke="#4a3206" stroke-width="7"/><circle cx="921.3" cy="788.4" r="36.0" fill="#f3cf62"/><circle cx="912.6" cy="778.0" r="14.5" fill="#f8e08a"/><polygon points="744.9,740.1 818.4,714.9 879.3,740.1 801.6,771.6" fill="#6f93d2"/><polygon points="744.9,740.1 801.6,771.6 807.9,851.4 755.4,824.1" fill="#5277bf"/><polygon points="801.6,771.6 879.3,740.1 870.9,811.5 807.9,851.4" fill="#3b5da6"/><polygon points="744.9,740.1 818.4,714.9 879.3,740.1 870.9,811.5 807.9,851.4 755.4,824.1" fill="none" stroke="#16224a" stroke-width="7" stroke-linejoin="round"/><path d="M744.9,740.1L801.6,771.6L879.3,740.1M801.6,771.6L807.9,851.4" fill="none" stroke="#16224a" stroke-width="5" stroke-linejoin="round"/><circle cx="630.0" cy="835.0" r="48.0" fill="#e9b63a" stroke="#4a3206" stroke-width="7"/><circle cx="622.8" cy="825.4" r="29.8" fill="#f3cf62"/><circle cx="615.6" cy="816.8" r="12.0" fill="#f8e08a"/><polygon points="690.0,772.0 656.8,878.4 726.1,886.0" fill="#e2402f"/><polygon points="690.0,772.0 694.8,884.1 726.1,886.0" fill="#f0603c"/><polygon points="690.0,772.0 726.1,886.0 785.0,830.9" fill="#c41f2b"/><polygon points="690.0,772.0 656.8,878.4 726.1,886.0 785.0,830.9" fill="none" stroke="#3a0d0d" stroke-width="7" stroke-linejoin="round"/><path d="M690.0,772.0L726.1,886.0" stroke="#3a0d0d" stroke-width="5"/><path d="M690.0,772.0L694.8,884.1" stroke="#7a1515" stroke-width="2.5"/><polygon points="882.0,842.0 847.0,954.0 920.0,962.0" fill="#e2402f"/><polygon points="882.0,842.0 887.0,960.0 920.0,962.0" fill="#f0603c"/><polygon points="882.0,842.0 920.0,962.0 982.0,904.0" fill="#c41f2b"/><polygon points="882.0,842.0 847.0,954.0 920.0,962.0 982.0,904.0" fill="none" stroke="#3a0d0d" stroke-width="7" stroke-linejoin="round"/><path d="M882.0,842.0L920.0,962.0" stroke="#3a0d0d" stroke-width="5"/><path d="M882.0,842.0L887.0,960.0" stroke="#7a1515" stroke-width="2.5"/><polygon points="721.8,858.2 798.8,831.8 862.6,858.2 781.2,891.2" fill="#6f93d2"/><polygon points="721.8,858.2 781.2,891.2 787.8,974.8 732.8,946.2" fill="#5277bf"/><polygon points="781.2,891.2 862.6,858.2 853.8,933.0 787.8,974.8" fill="#3b5da6"/><polygon points="721.8,858.2 798.8,831.8 862.6,858.2 853.8,933.0 787.8,974.8 732.8,946.2" fill="none" stroke="#16224a" stroke-width="7" stroke-linejoin="round"/><path d="M721.8,858.2L781.2,891.2L862.6,858.2M781.2,891.2L787.8,974.8" fill="none" stroke="#16224a" stroke-width="5" stroke-linejoin="round"/><polygon points="575.0,880.0 541.8,986.4 611.1,994.0" fill="#e2402f"/><polygon points="575.0,880.0 579.8,992.1 611.1,994.0" fill="#f0603c"/><polygon points="575.0,880.0 611.1,994.0 670.0,938.9" fill="#c41f2b"/><polygon points="575.0,880.0 541.8,986.4 611.1,994.0 670.0,938.9" fill="none" stroke="#3a0d0d" stroke-width="7" stroke-linejoin="round"/><path d="M575.0,880.0L611.1,994.0" stroke="#3a0d0d" stroke-width="5"/><path d="M575.0,880.0L579.8,992.1" stroke="#7a1515" stroke-width="2.5"/><circle cx="688.0" cy="940.0" r="52.0" fill="#e9b63a" stroke="#4a3206" stroke-width="7"/><circle cx="680.2" cy="929.6" r="32.2" fill="#f3cf62"/><circle cx="672.4" cy="920.2" r="13.0" fill="#f8e08a"/></g><rect x="114.6" y="334.4" width="379.4" height="90.8" fill="#131313"/><text transform="translate(356.35,239.50) scale(0.9259,1.0000)" font-family="Liberation Sans, DejaVu Sans, sans-serif" font-weight="bold" font-size="124.5" fill="#eef0c2" stroke="#eef0c2" stroke-width="9.00" stroke-linejoin="round" vector-effect="non-scaling-stroke">3</text><text transform="translate(425.08,239.50) scale(0.9373,1.0000)" font-family="Liberation Sans, DejaVu Sans, sans-serif" font-weight="bold" font-size="124.5" fill="#eef0c2" stroke="#eef0c2" stroke-width="9.00" stroke-linejoin="round" vector-effect="non-scaling-stroke">0</text><text transform="translate(355.52,238.30) scale(0.9744,1.0000)" font-family="Liberation Sans, DejaVu Sans, sans-serif" font-weight="bold" font-size="124.5" fill="#131313" stroke="#131313" stroke-width="6.00" stroke-linejoin="round" vector-effect="non-scaling-stroke">3</text><text transform="translate(424.14,238.30) scale(0.9880,1.0000)" font-family="Liberation Sans, DejaVu Sans, sans-serif" font-weight="bold" font-size="124.5" fill="#131313" stroke="#131313" stroke-width="6.00" stroke-linejoin="round" vector-effect="non-scaling-stroke">0</text><text transform="translate(261.17,313.20) scale(0.6080,1.0000)" font-family="Liberation Sans, DejaVu Sans, sans-serif" font-weight="bold" font-size="70.0" fill="#eef0c2" stroke="#eef0c2" stroke-width="6.00" stroke-linejoin="round" vector-effect="non-scaling-stroke">S</text><text transform="translate(296.85,313.20) scale(0.7509,1.0000)" font-family="Liberation Sans, DejaVu Sans, sans-serif" font-weight="bold" font-size="70.0" fill="#eef0c2" stroke="#eef0c2" stroke-width="6.00" stroke-linejoin="round" vector-effect="non-scaling-stroke">o</text><text transform="translate(332.25,313.20) scale(1.0942,1.0000)" font-family="Liberation Sans, DejaVu Sans, sans-serif" font-weight="bold" font-size="70.0" fill="#eef0c2" stroke="#eef0c2" stroke-width="6.00" stroke-linejoin="round" vector-effect="non-scaling-stroke">r</text><text transform="translate(371.14,313.20) scale(0.8888,1.0000)" font-family="Liberation Sans, DejaVu Sans, sans-serif" font-weight="bold" font-size="70.0" fill="#eef0c2" stroke="#eef0c2" stroke-width="6.00" stroke-linejoin="round" vector-effect="non-scaling-stroke">t</text><text transform="translate(398.20,313.20) scale(0.5518,1.0000)" font-family="Liberation Sans, DejaVu Sans, sans-serif" font-weight="bold" font-size="70.0" fill="#eef0c2" stroke="#eef0c2" stroke-width="6.00" stroke-linejoin="round" vector-effect="non-scaling-stroke">i</text><text transform="translate(413.12,313.20) scale(0.7544,1.0000)" font-family="Liberation Sans, DejaVu Sans, sans-serif" font-weight="bold" font-size="70.0" fill="#eef0c2" stroke="#eef0c2" stroke-width="6.00" stroke-linejoin="round" vector-effect="non-scaling-stroke">n</text><text transform="translate(452.02,313.20) scale(0.8294,1.0000)" font-family="Liberation Sans, DejaVu Sans, sans-serif" font-weight="bold" font-size="70.0" fill="#eef0c2" stroke="#eef0c2" stroke-width="6.00" stroke-linejoin="round" vector-effect="non-scaling-stroke">g</text><text transform="translate(260.33,312.00) scale(0.6796,1.0000)" font-family="Liberation Sans, DejaVu Sans, sans-serif" font-weight="bold" font-size="70.0" fill="#131313" stroke="#131313" stroke-width="3.00" stroke-linejoin="round" vector-effect="non-scaling-stroke">S</text><text transform="translate(295.93,312.00) scale(0.8313,1.0000)" font-family="Liberation Sans, DejaVu Sans, sans-serif" font-weight="bold" font-size="70.0" fill="#131313" stroke="#131313" stroke-width="3.00" stroke-linejoin="round" vector-effect="non-scaling-stroke">o</text><text transform="translate(330.91,312.00) scale(1.2333,1.0000)" font-family="Liberation Sans, DejaVu Sans, sans-serif" font-weight="bold" font-size="70.0" fill="#131313" stroke="#131313" stroke-width="3.00" stroke-linejoin="round" vector-effect="non-scaling-stroke">r</text><text transform="translate(370.32,312.00) scale(1.0277,1.0000)" font-family="Liberation Sans, DejaVu Sans, sans-serif" font-weight="bold" font-size="70.0" fill="#131313" stroke="#131313" stroke-width="3.00" stroke-linejoin="round" vector-effect="non-scaling-stroke">t</text><text transform="translate(395.98,312.00) scale(0.8642,1.0000)" font-family="Liberation Sans, DejaVu Sans, sans-serif" font-weight="bold" font-size="70.0" fill="#131313" stroke="#131313" stroke-width="3.00" stroke-linejoin="round" vector-effect="non-scaling-stroke">i</text><text transform="translate(412.01,312.00) scale(0.8431,1.0000)" font-family="Liberation Sans, DejaVu Sans, sans-serif" font-weight="bold" font-size="70.0" fill="#131313" stroke="#131313" stroke-width="3.00" stroke-linejoin="round" vector-effect="non-scaling-stroke">n</text><text transform="translate(451.07,312.00) scale(0.9146,1.0000)" font-family="Liberation Sans, DejaVu Sans, sans-serif" font-weight="bold" font-size="70.0" fill="#131313" stroke="#131313" stroke-width="3.00" stroke-linejoin="round" vector-effect="non-scaling-stroke">g</text><text transform="translate(148.37,411.30) scale(0.5175,1.0000)" font-family="Liberation Sans, DejaVu Sans, sans-serif" font-weight="bold" font-size="91.8" fill="#f1f1f1" stroke="#f1f1f1" stroke-width="1.10" stroke-linejoin="round" vector-effect="non-scaling-stroke">F</text><text transform="translate(177.50,411.30) scale(0.5776,1.0000)" font-family="Liberation Mono, DejaVu Sans Mono, monospace" font-weight="bold" font-size="96.0" fill="#f1f1f1" stroke="#f1f1f1" stroke-width="1.10" stroke-linejoin="round" vector-effect="non-scaling-stroke">I</text><text transform="translate(209.21,411.30) scale(0.5116,1.0000)" font-family="Liberation Sans, DejaVu Sans, sans-serif" font-weight="bold" font-size="91.8" fill="#f1f1f1" stroke="#f1f1f1" stroke-width="1.10" stroke-linejoin="round" vector-effect="non-scaling-stroke">L</text><text transform="translate(240.38,411.30) scale(0.4679,1.0000)" font-family="Liberation Sans, DejaVu Sans, sans-serif" font-weight="bold" font-size="91.8" fill="#f1f1f1" stroke="#f1f1f1" stroke-width="1.10" stroke-linejoin="round" vector-effect="non-scaling-stroke">E</text><text transform="translate(283.15,411.30) scale(0.5368,1.0000)" font-family="Liberation Sans, DejaVu Sans, sans-serif" font-weight="bold" font-size="91.8" fill="#f1f1f1" stroke="#f1f1f1" stroke-width="1.10" stroke-linejoin="round" vector-effect="non-scaling-stroke">F</text><text transform="translate(314.09,411.30) scale(0.5472,1.0000)" font-family="Liberation Sans, DejaVu Sans, sans-serif" font-weight="bold" font-size="91.8" fill="#f1f1f1" stroke="#f1f1f1" stroke-width="1.10" stroke-linejoin="round" vector-effect="non-scaling-stroke">O</text><text transform="translate(354.24,411.30) scale(0.5222,1.0000)" font-family="Liberation Sans, DejaVu Sans, sans-serif" font-weight="bold" font-size="91.8" fill="#f1f1f1" stroke="#f1f1f1" stroke-width="1.10" stroke-linejoin="round" vector-effect="non-scaling-stroke">L</text><text transform="translate(382.77,411.30) scale(0.4849,1.0000)" font-family="Liberation Sans, DejaVu Sans, sans-serif" font-weight="bold" font-size="91.8" fill="#f1f1f1" stroke="#f1f1f1" stroke-width="1.10" stroke-linejoin="round" vector-effect="non-scaling-stroke">D</text><text transform="translate(417.58,411.30) scale(0.4679,1.0000)" font-family="Liberation Sans, DejaVu Sans, sans-serif" font-weight="bold" font-size="91.8" fill="#f1f1f1" stroke="#f1f1f1" stroke-width="1.10" stroke-linejoin="round" vector-effect="non-scaling-stroke">E</text><text transform="translate(447.08,411.30) scale(0.4994,1.0000)" font-family="Liberation Sans, DejaVu Sans, sans-serif" font-weight="bold" font-size="91.8" fill="#f1f1f1" stroke="#f1f1f1" stroke-width="1.10" stroke-linejoin="round" vector-effect="non-scaling-stroke">R</text><text transform="translate(182.69,489.20) scale(0.8605,1.0000)" font-family="Liberation Sans, DejaVu Sans, sans-serif" font-weight="bold" font-size="70.5" fill="#131313" stroke="#131313" stroke-width="3.00" stroke-linejoin="round" vector-effect="non-scaling-stroke">A</text><text transform="translate(228.81,489.20) scale(0.8317,1.0000)" font-family="Liberation Sans, DejaVu Sans, sans-serif" font-weight="bold" font-size="70.5" fill="#131313" stroke="#131313" stroke-width="3.00" stroke-linejoin="round" vector-effect="non-scaling-stroke">c</text><text transform="translate(266.35,489.20) scale(0.9928,1.0000)" font-family="Liberation Sans, DejaVu Sans, sans-serif" font-weight="bold" font-size="70.5" fill="#131313" stroke="#131313" stroke-width="3.00" stroke-linejoin="round" vector-effect="non-scaling-stroke">t</text><text transform="translate(292.28,489.20) scale(0.8167,1.0000)" font-family="Liberation Sans, DejaVu Sans, sans-serif" font-weight="bold" font-size="70.5" fill="#131313" stroke="#131313" stroke-width="3.00" stroke-linejoin="round" vector-effect="non-scaling-stroke">i</text><text transform="translate(310.93,489.20) scale(0.9709,1.0000)" font-family="Liberation Sans, DejaVu Sans, sans-serif" font-weight="bold" font-size="70.5" fill="#131313" stroke="#131313" stroke-width="3.00" stroke-linejoin="round" vector-effect="non-scaling-stroke">v</text><text transform="translate(351.83,489.20) scale(0.7857,1.0000)" font-family="Liberation Sans, DejaVu Sans, sans-serif" font-weight="bold" font-size="70.5" fill="#131313" stroke="#131313" stroke-width="3.00" stroke-linejoin="round" vector-effect="non-scaling-stroke">i</text><text transform="translate(369.46,489.20) scale(0.9790,1.0000)" font-family="Liberation Sans, DejaVu Sans, sans-serif" font-weight="bold" font-size="70.5" fill="#131313" stroke="#131313" stroke-width="3.00" stroke-linejoin="round" vector-effect="non-scaling-stroke">t</text><text transform="translate(396.13,489.20) scale(0.7650,1.0000)" font-family="Liberation Sans, DejaVu Sans, sans-serif" font-weight="bold" font-size="70.5" fill="#131313" stroke="#131313" stroke-width="3.00" stroke-linejoin="round" vector-effect="non-scaling-stroke">i</text><text transform="translate(412.90,489.20) scale(0.9810,1.0000)" font-family="Liberation Sans, DejaVu Sans, sans-serif" font-weight="bold" font-size="70.5" fill="#131313" stroke="#131313" stroke-width="3.00" stroke-linejoin="round" vector-effect="non-scaling-stroke">e</text><text transform="translate(453.45,489.20) scale(0.7477,1.0000)" font-family="Liberation Sans, DejaVu Sans, sans-serif" font-weight="bold" font-size="70.5" fill="#131313" stroke="#131313" stroke-width="3.00" stroke-linejoin="round" vector-effect="non-scaling-stroke">s</text><text id="clogo1" x="114" y="524" font-family="Liberation Sans, DejaVu Sans, sans-serif" font-style="italic" font-size="19.5" textLength="57" lengthAdjust="spacingAndGlyphs" fill="#e2675f">The Autism</text><text id="clogo2" x="175.5" y="523.900" font-family="Liberation Sans, DejaVu Sans, sans-serif" font-size="14" textLength="48.5" lengthAdjust="spacingAndGlyphs" fill="#3f8c99">Helper<tspan fill="#b23a48">.</tspan></text><path d="M156.800,512.200l1.800,-3.200l1.800,3.200z" fill="#2a7f8e"/><circle cx="160.600" cy="506.400" r="0.800" fill="#b23a48"/><rect x="162.300" y="510.300" width="1.400" height="1.400" fill="#8fbf6f"/><path d="M154,506.800l1.200,2" stroke="#e8d86a" stroke-width="0.800"/></g><g transform="translate(753,942)"><text x="186.0" y="78.6" font-family="Liberation Sans, DejaVu Sans, sans-serif" font-weight="bold" font-size="31.5" textLength="68.5" lengthAdjust="spacingAndGlyphs" fill="#151515" stroke="#151515" stroke-width="1.1" stroke-linejoin="round">Table</text><text x="267.2" y="78.6" font-family="Liberation Sans, DejaVu Sans, sans-serif" font-weight="bold" font-size="31.5" textLength="28.4" lengthAdjust="spacingAndGlyphs" fill="#151515" stroke="#151515" stroke-width="1.1" stroke-linejoin="round">of</text><text x="308.3" y="78.6" font-family="Liberation Sans, DejaVu Sans, sans-serif" font-weight="bold" font-size="31.5" textLength="117.2" lengthAdjust="spacingAndGlyphs" fill="#151515" stroke="#151515" stroke-width="1.1" stroke-linejoin="round">Contents</text><rect x="29.6" y="91.7" width="553.4" height="62.7" fill="url(#hdrg)" stroke="#3a3a3a" stroke-width="1"/><text x="185.4" y="129.2" font-family="Liberation Sans, DejaVu Sans, sans-serif" font-weight="bold" font-size="20.8" textLength="97" lengthAdjust="spacingAndGlyphs" fill="#151515" stroke="#151515" stroke-width="0.7" stroke-linejoin="round">File Folder</text><text x="482.7" y="129.2" font-family="Liberation Sans, DejaVu Sans, sans-serif" font-weight="bold" font-size="20.8" textLength="57" lengthAdjust="spacingAndGlyphs" fill="#151515" stroke="#151515" stroke-width="0.7" stroke-linejoin="round">Pages</text><path d="M29.600,200.4H583" stroke="#6a6a6a" stroke-width="1"/><text x="36" y="181.4" font-family="Liberation Sans, DejaVu Sans, sans-serif" font-size="11.5" fill="#333">10 Size (Big and Little) File Folder Activities</text><text x="511" y="181.4" font-family="Liberation Sans, DejaVu Sans, sans-serif" font-size="11.5" fill="#333" text-anchor="middle">p. 3 - 32</text><path d="M29.600,244.4H583" stroke="#6a6a6a" stroke-width="1"/><text x="36" y="226.4" font-family="Liberation Sans, DejaVu Sans, sans-serif" font-size="11.5" fill="#333">10 Color File Folder Activities</text><text x="511" y="226.4" font-family="Liberation Sans, DejaVu Sans, sans-serif" font-size="11.5" fill="#333" text-anchor="middle">p. 33 - 56</text><path d="M29.600,289.8H583" stroke="#6a6a6a" stroke-width="1"/><text x="36" y="271.1" font-family="Liberation Sans, DejaVu Sans, sans-serif" font-size="11.5" fill="#333">10 Type File Folder Activities</text><text x="511" y="271.1" font-family="Liberation Sans, DejaVu Sans, sans-serif" font-size="11.5" fill="#333" text-anchor="middle">p. 57 - 82</text><path d="M440.300,91.700V289.800" stroke="#3a3a3a" stroke-width="1"/><path d="M29.600,154.400V289.800M583,154.400V289.800" stroke="#9a9a9a" stroke-width=".8"/><rect x="15.4" y="383.2" width="583.4" height="212" fill="none" stroke="#222" stroke-width="2.5"/><text x="306" y="409" font-family="Liberation Sans, DejaVu Sans, sans-serif" font-weight="bold" font-size="13.5" text-anchor="middle" fill="#111" stroke="#111" stroke-width=".4">Directions for setup:</text><text x="30" y="441" font-family="Liberation Sans, DejaVu Sans, sans-serif" font-weight="bold" font-size="14.6" fill="#111" stroke="#111" stroke-width=".5">Paste the two main pages to the two inside sides of a file folder.</text><text x="30" y="474" font-family="Liberation Sans, DejaVu Sans, sans-serif" font-weight="bold" font-size="14.6" fill="#111" stroke="#111" stroke-width=".5">Follow instructions for labeling the file folder. Once labeled, laminate the file</text><text x="30" y="488" font-family="Liberation Sans, DejaVu Sans, sans-serif" font-weight="bold" font-size="14.6" fill="#111" stroke="#111" stroke-width=".5">folder (no longer use). Put hard velcro in the small boxes. Laminate the pieces</text><text x="30" y="502" font-family="Liberation Sans, DejaVu Sans, sans-serif" font-weight="bold" font-size="14.6" fill="#111" stroke="#111" stroke-width=".5">page. Cut out the pieces and put soft velcro on the back of each piece. Store</text><text x="30" y="516" font-family="Liberation Sans, DejaVu Sans, sans-serif" font-weight="bold" font-size="14.6" fill="#111" stroke="#111" stroke-width=".5">the pieces in a baggie.</text><text x="30" y="557" font-family="Liberation Sans, DejaVu Sans, sans-serif" font-weight="bold" font-size="14.6" fill="#111" stroke="#111" stroke-width=".5">Labels: Follow the guide to label the file folder activity. This helps prevent</text><text x="30" y="571" font-family="Liberation Sans, DejaVu Sans, sans-serif" font-weight="bold" font-size="14.6" fill="#111" stroke="#111" stroke-width=".5">things from getting lost.</text><rect x="13.4" y="602.6" width="128.1" height="174" fill="#6b4a36"/><polygon points="25.4,640 127.5,625 133.5,776.600 33.4,776.600" fill="#d9d2c0"/><polygon points="101.5,690 141.5,660 141.5,776.600 111.5,776.600" fill="#8a6a6e"/><rect x="58.4" y="655" width="40" height="22" fill="#a9cfe0"/><rect x="161.5" y="602.6" width="131.5" height="174" fill="#8a5a3a"/><polygon points="161.5,650 293,700 293,776.600 161.5,776.600" fill="#ece9e2"/><polygon points="201.5,602.600 293,602.600 293,690 211.5,640" fill="#a06a48"/><polygon points="253,720 278,700 288,776.600 258,776.600" fill="#a0506a"/><rect x="308.4" y="602.6" width="131.60000000000002" height="174" fill="#3a3432"/><polygon points="318.4,650 440,640 440,776.600 308.4,776.600" fill="#d6d0bc"/><rect x="348.4" y="680" width="60" height="16" fill="#b9d6c0"/><polygon points="385,720 440,690 440,776.600 400,776.600" fill="#a5506a"/></g><path d="M1441.400,725.200L1441.400,739.800L1444.200,737.400L1446.700,742.800L1450.100,741.300L1447.600,736L1451.800,735.700Z" fill="#0a0a0a" stroke="#f6f6f6" stroke-width="1.3" stroke-linejoin="round"/></svg><div class="abs" style="left:0;top:948px;width:1774px;height:27px;background:linear-gradient(180deg,rgba(0,0,0,0),rgba(0,0,0,.11))"></div></div></div></div>
</body>
</html>
